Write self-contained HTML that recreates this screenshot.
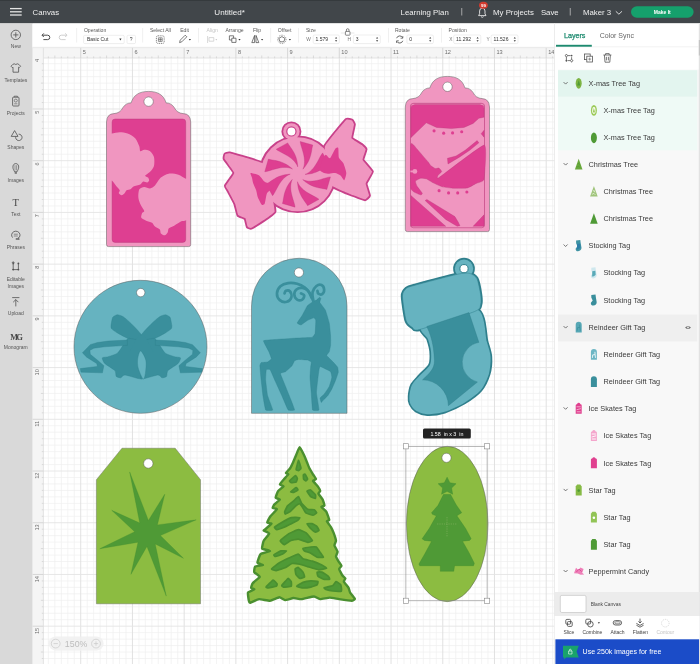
<!DOCTYPE html>
<html><head><meta charset="utf-8">
<style>
*{box-sizing:border-box;}
html,body{margin:0;padding:0;}
body{width:700px;height:664px;position:relative;overflow:hidden;background:#fff;font-family:"Liberation Sans",sans-serif;}
.a{position:absolute;will-change:transform;}

</style></head><body>
<svg class="a" style="left:0;top:0" width="700" height="664" viewBox="0 0 700 664"><line x1="48.39" y1="58" x2="48.39" y2="664" stroke="#efefef" stroke-width="0.7"/><line x1="54.86" y1="58" x2="54.86" y2="664" stroke="#efefef" stroke-width="0.7"/><line x1="61.33" y1="58" x2="61.33" y2="664" stroke="#efefef" stroke-width="0.7"/><line x1="67.79" y1="58" x2="67.79" y2="664" stroke="#efefef" stroke-width="0.7"/><line x1="74.25" y1="58" x2="74.25" y2="664" stroke="#efefef" stroke-width="0.7"/><line x1="87.19" y1="58" x2="87.19" y2="664" stroke="#efefef" stroke-width="0.7"/><line x1="93.65" y1="58" x2="93.65" y2="664" stroke="#efefef" stroke-width="0.7"/><line x1="100.11" y1="58" x2="100.11" y2="664" stroke="#efefef" stroke-width="0.7"/><line x1="106.58" y1="58" x2="106.58" y2="664" stroke="#efefef" stroke-width="0.7"/><line x1="113.05" y1="58" x2="113.05" y2="664" stroke="#efefef" stroke-width="0.7"/><line x1="119.51" y1="58" x2="119.51" y2="664" stroke="#efefef" stroke-width="0.7"/><line x1="125.97" y1="58" x2="125.97" y2="664" stroke="#efefef" stroke-width="0.7"/><line x1="138.91" y1="58" x2="138.91" y2="664" stroke="#efefef" stroke-width="0.7"/><line x1="145.37" y1="58" x2="145.37" y2="664" stroke="#efefef" stroke-width="0.7"/><line x1="151.83" y1="58" x2="151.83" y2="664" stroke="#efefef" stroke-width="0.7"/><line x1="158.30" y1="58" x2="158.30" y2="664" stroke="#efefef" stroke-width="0.7"/><line x1="164.76" y1="58" x2="164.76" y2="664" stroke="#efefef" stroke-width="0.7"/><line x1="171.23" y1="58" x2="171.23" y2="664" stroke="#efefef" stroke-width="0.7"/><line x1="177.69" y1="58" x2="177.69" y2="664" stroke="#efefef" stroke-width="0.7"/><line x1="190.62" y1="58" x2="190.62" y2="664" stroke="#efefef" stroke-width="0.7"/><line x1="197.09" y1="58" x2="197.09" y2="664" stroke="#efefef" stroke-width="0.7"/><line x1="203.56" y1="58" x2="203.56" y2="664" stroke="#efefef" stroke-width="0.7"/><line x1="210.02" y1="58" x2="210.02" y2="664" stroke="#efefef" stroke-width="0.7"/><line x1="216.48" y1="58" x2="216.48" y2="664" stroke="#efefef" stroke-width="0.7"/><line x1="222.95" y1="58" x2="222.95" y2="664" stroke="#efefef" stroke-width="0.7"/><line x1="229.41" y1="58" x2="229.41" y2="664" stroke="#efefef" stroke-width="0.7"/><line x1="242.34" y1="58" x2="242.34" y2="664" stroke="#efefef" stroke-width="0.7"/><line x1="248.81" y1="58" x2="248.81" y2="664" stroke="#efefef" stroke-width="0.7"/><line x1="255.28" y1="58" x2="255.28" y2="664" stroke="#efefef" stroke-width="0.7"/><line x1="261.74" y1="58" x2="261.74" y2="664" stroke="#efefef" stroke-width="0.7"/><line x1="268.20" y1="58" x2="268.20" y2="664" stroke="#efefef" stroke-width="0.7"/><line x1="274.67" y1="58" x2="274.67" y2="664" stroke="#efefef" stroke-width="0.7"/><line x1="281.13" y1="58" x2="281.13" y2="664" stroke="#efefef" stroke-width="0.7"/><line x1="294.06" y1="58" x2="294.06" y2="664" stroke="#efefef" stroke-width="0.7"/><line x1="300.53" y1="58" x2="300.53" y2="664" stroke="#efefef" stroke-width="0.7"/><line x1="307.00" y1="58" x2="307.00" y2="664" stroke="#efefef" stroke-width="0.7"/><line x1="313.46" y1="58" x2="313.46" y2="664" stroke="#efefef" stroke-width="0.7"/><line x1="319.92" y1="58" x2="319.92" y2="664" stroke="#efefef" stroke-width="0.7"/><line x1="326.39" y1="58" x2="326.39" y2="664" stroke="#efefef" stroke-width="0.7"/><line x1="332.86" y1="58" x2="332.86" y2="664" stroke="#efefef" stroke-width="0.7"/><line x1="345.78" y1="58" x2="345.78" y2="664" stroke="#efefef" stroke-width="0.7"/><line x1="352.25" y1="58" x2="352.25" y2="664" stroke="#efefef" stroke-width="0.7"/><line x1="358.72" y1="58" x2="358.72" y2="664" stroke="#efefef" stroke-width="0.7"/><line x1="365.18" y1="58" x2="365.18" y2="664" stroke="#efefef" stroke-width="0.7"/><line x1="371.64" y1="58" x2="371.64" y2="664" stroke="#efefef" stroke-width="0.7"/><line x1="378.11" y1="58" x2="378.11" y2="664" stroke="#efefef" stroke-width="0.7"/><line x1="384.58" y1="58" x2="384.58" y2="664" stroke="#efefef" stroke-width="0.7"/><line x1="397.50" y1="58" x2="397.50" y2="664" stroke="#efefef" stroke-width="0.7"/><line x1="403.97" y1="58" x2="403.97" y2="664" stroke="#efefef" stroke-width="0.7"/><line x1="410.43" y1="58" x2="410.43" y2="664" stroke="#efefef" stroke-width="0.7"/><line x1="416.90" y1="58" x2="416.90" y2="664" stroke="#efefef" stroke-width="0.7"/><line x1="423.37" y1="58" x2="423.37" y2="664" stroke="#efefef" stroke-width="0.7"/><line x1="429.83" y1="58" x2="429.83" y2="664" stroke="#efefef" stroke-width="0.7"/><line x1="436.29" y1="58" x2="436.29" y2="664" stroke="#efefef" stroke-width="0.7"/><line x1="449.23" y1="58" x2="449.23" y2="664" stroke="#efefef" stroke-width="0.7"/><line x1="455.69" y1="58" x2="455.69" y2="664" stroke="#efefef" stroke-width="0.7"/><line x1="462.15" y1="58" x2="462.15" y2="664" stroke="#efefef" stroke-width="0.7"/><line x1="468.62" y1="58" x2="468.62" y2="664" stroke="#efefef" stroke-width="0.7"/><line x1="475.09" y1="58" x2="475.09" y2="664" stroke="#efefef" stroke-width="0.7"/><line x1="481.55" y1="58" x2="481.55" y2="664" stroke="#efefef" stroke-width="0.7"/><line x1="488.01" y1="58" x2="488.01" y2="664" stroke="#efefef" stroke-width="0.7"/><line x1="500.94" y1="58" x2="500.94" y2="664" stroke="#efefef" stroke-width="0.7"/><line x1="507.41" y1="58" x2="507.41" y2="664" stroke="#efefef" stroke-width="0.7"/><line x1="513.88" y1="58" x2="513.88" y2="664" stroke="#efefef" stroke-width="0.7"/><line x1="520.34" y1="58" x2="520.34" y2="664" stroke="#efefef" stroke-width="0.7"/><line x1="526.80" y1="58" x2="526.80" y2="664" stroke="#efefef" stroke-width="0.7"/><line x1="533.27" y1="58" x2="533.27" y2="664" stroke="#efefef" stroke-width="0.7"/><line x1="539.74" y1="58" x2="539.74" y2="664" stroke="#efefef" stroke-width="0.7"/><line x1="552.66" y1="58" x2="552.66" y2="664" stroke="#efefef" stroke-width="0.7"/><line x1="43.5" y1="63.73" x2="556" y2="63.73" stroke="#efefef" stroke-width="0.7"/><line x1="43.5" y1="70.19" x2="556" y2="70.19" stroke="#efefef" stroke-width="0.7"/><line x1="43.5" y1="76.66" x2="556" y2="76.66" stroke="#efefef" stroke-width="0.7"/><line x1="43.5" y1="83.12" x2="556" y2="83.12" stroke="#efefef" stroke-width="0.7"/><line x1="43.5" y1="89.59" x2="556" y2="89.59" stroke="#efefef" stroke-width="0.7"/><line x1="43.5" y1="96.05" x2="556" y2="96.05" stroke="#efefef" stroke-width="0.7"/><line x1="43.5" y1="102.52" x2="556" y2="102.52" stroke="#efefef" stroke-width="0.7"/><line x1="43.5" y1="115.45" x2="556" y2="115.45" stroke="#efefef" stroke-width="0.7"/><line x1="43.5" y1="121.91" x2="556" y2="121.91" stroke="#efefef" stroke-width="0.7"/><line x1="43.5" y1="128.38" x2="556" y2="128.38" stroke="#efefef" stroke-width="0.7"/><line x1="43.5" y1="134.84" x2="556" y2="134.84" stroke="#efefef" stroke-width="0.7"/><line x1="43.5" y1="141.31" x2="556" y2="141.31" stroke="#efefef" stroke-width="0.7"/><line x1="43.5" y1="147.77" x2="556" y2="147.77" stroke="#efefef" stroke-width="0.7"/><line x1="43.5" y1="154.24" x2="556" y2="154.24" stroke="#efefef" stroke-width="0.7"/><line x1="43.5" y1="167.17" x2="556" y2="167.17" stroke="#efefef" stroke-width="0.7"/><line x1="43.5" y1="173.63" x2="556" y2="173.63" stroke="#efefef" stroke-width="0.7"/><line x1="43.5" y1="180.10" x2="556" y2="180.10" stroke="#efefef" stroke-width="0.7"/><line x1="43.5" y1="186.56" x2="556" y2="186.56" stroke="#efefef" stroke-width="0.7"/><line x1="43.5" y1="193.03" x2="556" y2="193.03" stroke="#efefef" stroke-width="0.7"/><line x1="43.5" y1="199.49" x2="556" y2="199.49" stroke="#efefef" stroke-width="0.7"/><line x1="43.5" y1="205.96" x2="556" y2="205.96" stroke="#efefef" stroke-width="0.7"/><line x1="43.5" y1="218.89" x2="556" y2="218.89" stroke="#efefef" stroke-width="0.7"/><line x1="43.5" y1="225.35" x2="556" y2="225.35" stroke="#efefef" stroke-width="0.7"/><line x1="43.5" y1="231.82" x2="556" y2="231.82" stroke="#efefef" stroke-width="0.7"/><line x1="43.5" y1="238.28" x2="556" y2="238.28" stroke="#efefef" stroke-width="0.7"/><line x1="43.5" y1="244.75" x2="556" y2="244.75" stroke="#efefef" stroke-width="0.7"/><line x1="43.5" y1="251.21" x2="556" y2="251.21" stroke="#efefef" stroke-width="0.7"/><line x1="43.5" y1="257.68" x2="556" y2="257.68" stroke="#efefef" stroke-width="0.7"/><line x1="43.5" y1="270.61" x2="556" y2="270.61" stroke="#efefef" stroke-width="0.7"/><line x1="43.5" y1="277.07" x2="556" y2="277.07" stroke="#efefef" stroke-width="0.7"/><line x1="43.5" y1="283.54" x2="556" y2="283.54" stroke="#efefef" stroke-width="0.7"/><line x1="43.5" y1="290.00" x2="556" y2="290.00" stroke="#efefef" stroke-width="0.7"/><line x1="43.5" y1="296.47" x2="556" y2="296.47" stroke="#efefef" stroke-width="0.7"/><line x1="43.5" y1="302.93" x2="556" y2="302.93" stroke="#efefef" stroke-width="0.7"/><line x1="43.5" y1="309.40" x2="556" y2="309.40" stroke="#efefef" stroke-width="0.7"/><line x1="43.5" y1="322.33" x2="556" y2="322.33" stroke="#efefef" stroke-width="0.7"/><line x1="43.5" y1="328.79" x2="556" y2="328.79" stroke="#efefef" stroke-width="0.7"/><line x1="43.5" y1="335.26" x2="556" y2="335.26" stroke="#efefef" stroke-width="0.7"/><line x1="43.5" y1="341.72" x2="556" y2="341.72" stroke="#efefef" stroke-width="0.7"/><line x1="43.5" y1="348.19" x2="556" y2="348.19" stroke="#efefef" stroke-width="0.7"/><line x1="43.5" y1="354.65" x2="556" y2="354.65" stroke="#efefef" stroke-width="0.7"/><line x1="43.5" y1="361.12" x2="556" y2="361.12" stroke="#efefef" stroke-width="0.7"/><line x1="43.5" y1="374.05" x2="556" y2="374.05" stroke="#efefef" stroke-width="0.7"/><line x1="43.5" y1="380.51" x2="556" y2="380.51" stroke="#efefef" stroke-width="0.7"/><line x1="43.5" y1="386.98" x2="556" y2="386.98" stroke="#efefef" stroke-width="0.7"/><line x1="43.5" y1="393.44" x2="556" y2="393.44" stroke="#efefef" stroke-width="0.7"/><line x1="43.5" y1="399.91" x2="556" y2="399.91" stroke="#efefef" stroke-width="0.7"/><line x1="43.5" y1="406.37" x2="556" y2="406.37" stroke="#efefef" stroke-width="0.7"/><line x1="43.5" y1="412.84" x2="556" y2="412.84" stroke="#efefef" stroke-width="0.7"/><line x1="43.5" y1="425.77" x2="556" y2="425.77" stroke="#efefef" stroke-width="0.7"/><line x1="43.5" y1="432.23" x2="556" y2="432.23" stroke="#efefef" stroke-width="0.7"/><line x1="43.5" y1="438.70" x2="556" y2="438.70" stroke="#efefef" stroke-width="0.7"/><line x1="43.5" y1="445.16" x2="556" y2="445.16" stroke="#efefef" stroke-width="0.7"/><line x1="43.5" y1="451.63" x2="556" y2="451.63" stroke="#efefef" stroke-width="0.7"/><line x1="43.5" y1="458.09" x2="556" y2="458.09" stroke="#efefef" stroke-width="0.7"/><line x1="43.5" y1="464.56" x2="556" y2="464.56" stroke="#efefef" stroke-width="0.7"/><line x1="43.5" y1="477.49" x2="556" y2="477.49" stroke="#efefef" stroke-width="0.7"/><line x1="43.5" y1="483.95" x2="556" y2="483.95" stroke="#efefef" stroke-width="0.7"/><line x1="43.5" y1="490.42" x2="556" y2="490.42" stroke="#efefef" stroke-width="0.7"/><line x1="43.5" y1="496.88" x2="556" y2="496.88" stroke="#efefef" stroke-width="0.7"/><line x1="43.5" y1="503.35" x2="556" y2="503.35" stroke="#efefef" stroke-width="0.7"/><line x1="43.5" y1="509.81" x2="556" y2="509.81" stroke="#efefef" stroke-width="0.7"/><line x1="43.5" y1="516.28" x2="556" y2="516.28" stroke="#efefef" stroke-width="0.7"/><line x1="43.5" y1="529.21" x2="556" y2="529.21" stroke="#efefef" stroke-width="0.7"/><line x1="43.5" y1="535.67" x2="556" y2="535.67" stroke="#efefef" stroke-width="0.7"/><line x1="43.5" y1="542.13" x2="556" y2="542.13" stroke="#efefef" stroke-width="0.7"/><line x1="43.5" y1="548.60" x2="556" y2="548.60" stroke="#efefef" stroke-width="0.7"/><line x1="43.5" y1="555.07" x2="556" y2="555.07" stroke="#efefef" stroke-width="0.7"/><line x1="43.5" y1="561.53" x2="556" y2="561.53" stroke="#efefef" stroke-width="0.7"/><line x1="43.5" y1="568.00" x2="556" y2="568.00" stroke="#efefef" stroke-width="0.7"/><line x1="43.5" y1="580.92" x2="556" y2="580.92" stroke="#efefef" stroke-width="0.7"/><line x1="43.5" y1="587.39" x2="556" y2="587.39" stroke="#efefef" stroke-width="0.7"/><line x1="43.5" y1="593.86" x2="556" y2="593.86" stroke="#efefef" stroke-width="0.7"/><line x1="43.5" y1="600.32" x2="556" y2="600.32" stroke="#efefef" stroke-width="0.7"/><line x1="43.5" y1="606.79" x2="556" y2="606.79" stroke="#efefef" stroke-width="0.7"/><line x1="43.5" y1="613.25" x2="556" y2="613.25" stroke="#efefef" stroke-width="0.7"/><line x1="43.5" y1="619.72" x2="556" y2="619.72" stroke="#efefef" stroke-width="0.7"/><line x1="43.5" y1="632.64" x2="556" y2="632.64" stroke="#efefef" stroke-width="0.7"/><line x1="43.5" y1="639.11" x2="556" y2="639.11" stroke="#efefef" stroke-width="0.7"/><line x1="43.5" y1="645.58" x2="556" y2="645.58" stroke="#efefef" stroke-width="0.7"/><line x1="43.5" y1="652.04" x2="556" y2="652.04" stroke="#efefef" stroke-width="0.7"/><line x1="43.5" y1="658.51" x2="556" y2="658.51" stroke="#efefef" stroke-width="0.7"/><line x1="80.72" y1="58" x2="80.72" y2="664" stroke="#dedede" stroke-width="0.9"/><line x1="132.44" y1="58" x2="132.44" y2="664" stroke="#dedede" stroke-width="0.9"/><line x1="184.16" y1="58" x2="184.16" y2="664" stroke="#dedede" stroke-width="0.9"/><line x1="235.88" y1="58" x2="235.88" y2="664" stroke="#dedede" stroke-width="0.9"/><line x1="287.60" y1="58" x2="287.60" y2="664" stroke="#dedede" stroke-width="0.9"/><line x1="339.32" y1="58" x2="339.32" y2="664" stroke="#dedede" stroke-width="0.9"/><line x1="391.04" y1="58" x2="391.04" y2="664" stroke="#dedede" stroke-width="0.9"/><line x1="442.76" y1="58" x2="442.76" y2="664" stroke="#dedede" stroke-width="0.9"/><line x1="494.48" y1="58" x2="494.48" y2="664" stroke="#dedede" stroke-width="0.9"/><line x1="546.20" y1="58" x2="546.20" y2="664" stroke="#dedede" stroke-width="0.9"/><line x1="43.5" y1="57.26" x2="556" y2="57.26" stroke="#e4e4e4" stroke-width="0.9"/><line x1="43.5" y1="108.98" x2="556" y2="108.98" stroke="#e4e4e4" stroke-width="0.9"/><line x1="43.5" y1="160.70" x2="556" y2="160.70" stroke="#e4e4e4" stroke-width="0.9"/><line x1="43.5" y1="212.42" x2="556" y2="212.42" stroke="#e4e4e4" stroke-width="0.9"/><line x1="43.5" y1="264.14" x2="556" y2="264.14" stroke="#e4e4e4" stroke-width="0.9"/><line x1="43.5" y1="315.86" x2="556" y2="315.86" stroke="#e4e4e4" stroke-width="0.9"/><line x1="43.5" y1="367.58" x2="556" y2="367.58" stroke="#e4e4e4" stroke-width="0.9"/><line x1="43.5" y1="419.30" x2="556" y2="419.30" stroke="#e4e4e4" stroke-width="0.9"/><line x1="43.5" y1="471.02" x2="556" y2="471.02" stroke="#e4e4e4" stroke-width="0.9"/><line x1="43.5" y1="522.74" x2="556" y2="522.74" stroke="#e4e4e4" stroke-width="0.9"/><line x1="43.5" y1="574.46" x2="556" y2="574.46" stroke="#e4e4e4" stroke-width="0.9"/><line x1="43.5" y1="626.18" x2="556" y2="626.18" stroke="#e4e4e4" stroke-width="0.9"/><path d="M106.5,244.4 L106.5,122.0 Q106.8,113.80000000000001 114.0,113.60000000000001 Q120.5,113.0 123.0,107.4 Q126.0,103.0 131.1,102.9 C133.5,94.9 139.5,91.4 148.6,91.4 C157.7,91.4 163.7,94.9 166.1,102.9 Q171.2,103.0 174.2,107.4 Q176.7,113.0 183.2,113.60000000000001 Q190.4,113.80000000000001 190.7,122.0 L190.7,244.4 Q190.7,246.6 188.7,246.6 L108.5,246.6 Q106.5,246.6 106.5,244.4 Z" fill="#f096c0" stroke="#5a5a5a" stroke-width="0.5"/><rect x="112.1" y="119.0" width="73.6" height="123.4" rx="3" fill="#de3f91" stroke="#b23573" stroke-width="0.4"/><path d="M108.0,136.53 C108.52,130.40 110.34,134.16 111.91,133.59 C113.48,133.02 117.65,132.22 119.74,132.22 C121.83,132.22 125.48,132.76 127.57,133.59 C129.66,134.42 133.83,136.78 135.4,138.48 C136.97,140.18 138.66,144.61 139.31,146.31 C139.96,148.01 139.64,150.73 140.29,151.2 C140.94,151.67 142.90,149.83 144.2,149.83 C145.50,149.83 148.76,150.23 150.07,151.2 C151.38,152.17 153.47,155.11 153.99,157.07 C154.51,159.03 154.51,163.92 153.99,165.88 C153.47,167.84 151.24,170.44 150.07,171.75 C148.90,173.06 145.44,174.89 145.18,175.67 C144.92,176.45 147.60,176.97 148.12,177.62 C148.64,178.27 149.23,179.91 149.1,180.56 C148.97,181.21 147.92,182.38 147.14,182.51 C146.36,182.64 144.14,181.28 143.23,181.54 C142.32,181.80 141.60,183.82 140.29,184.47 C138.98,185.12 134.75,185.78 133.44,186.43 C132.13,187.08 131.41,188.84 130.5,189.36 C129.59,189.88 127.37,189.82 126.59,190.34 C125.81,190.86 125.28,192.63 124.63,193.28 C123.98,193.93 122.48,195.23 121.7,195.23 C120.92,195.23 119.02,193.93 118.76,193.28 C118.50,192.63 120.13,191.38 119.74,190.34 C119.35,189.30 116.87,186.75 115.83,185.45 C114.79,184.15 112.95,181.34 111.91,180.56 C110.87,179.78 108.52,185.45 108.0,179.58 C107.48,173.71 107.48,142.66 108.0,136.53 Z" fill="#f096c0"/><path d="M139.31,189.36 C140.09,188.00 142.77,187.15 144.2,187.02 C145.63,186.89 148.63,188.60 150.07,188.39 C151.51,188.18 153.53,186.89 154.97,185.45 C156.41,184.01 159.01,179.19 160.84,177.62 C162.67,176.05 166.32,174.10 168.67,173.71 C171.02,173.32 176.23,174.04 178.45,174.69 C180.67,175.34 183.94,177.82 185.3,178.6 C186.66,179.38 188.19,175.47 188.63,180.56 C189.07,185.65 189.73,211.28 188.63,216.76 C187.53,222.24 182.55,220.34 180.41,221.65 C178.27,222.96 174.15,225.64 172.58,226.55 C171.01,227.46 169.32,227.72 168.67,228.5 C168.02,229.28 168.21,231.51 167.69,232.42 C167.17,233.33 165.66,235.22 164.75,235.35 C163.84,235.48 161.49,234.18 160.84,233.4 C160.19,232.62 160.64,230.39 159.86,229.48 C159.08,228.57 156.01,227.46 154.97,226.55 C153.93,225.64 153.20,223.41 152.03,222.63 C150.86,221.85 147.59,221.33 146.16,220.68 C144.73,220.03 141.79,218.78 141.27,217.74 C140.75,216.70 141.86,213.76 142.25,212.85 C142.64,211.94 144.46,212.06 144.2,210.89 C143.94,209.72 141.07,205.87 140.29,204.04 C139.51,202.21 138.46,199.15 138.33,197.19 C138.20,195.23 138.53,190.72 139.31,189.36 Z" fill="#f096c0"/><circle cx="148.6" cy="101.6" r="4.7" fill="#fff" stroke="#5a5a5a" stroke-width="0.5"/><path d="M405.3,229.4 L405.3,107.0 Q405.6,98.80000000000001 412.8,98.60000000000001 Q419.3,98.0 421.8,92.4 Q424.8,88.0 429.90000000000003,87.9 C432.3,79.9 438.3,76.4 447.40000000000003,76.4 C456.5,76.4 462.5,79.9 464.90000000000003,87.9 Q470.0,88.0 473.0,92.4 Q475.5,98.0 482.0,98.60000000000001 Q489.20000000000005,98.80000000000001 489.5,107.0 L489.5,229.4 Q489.5,231.6 487.5,231.6 L407.3,231.6 Q405.3,231.6 405.3,229.4 Z" fill="#f096c0" stroke="#5a5a5a" stroke-width="0.5"/><rect x="410.5" y="103.4" width="74" height="124" rx="3" fill="#de3f91" stroke="#b23573" stroke-width="0.4"/><circle cx="447.5" cy="86.8" r="4.7" fill="#fff" stroke="#5a5a5a" stroke-width="0.5"/><circle cx="140.5" cy="346.8" r="66.5" fill="#66b3c0" stroke="#5a5a5a" stroke-width="0.5"/><circle cx="140.7" cy="292.6" r="4.2" fill="#fff" stroke="#5a5a5a" stroke-width="0.5"/><path d="M251.5,413.3 L251.5,306 A47.75,47.75 0 0 1 347,306 L347,413.3 Z" fill="#66b3c0" stroke="#5a5a5a" stroke-width="0.5"/><circle cx="298.9" cy="272.5" r="4.6" fill="#fff" stroke="#5a5a5a" stroke-width="0.5"/><!--stocking--><path d="M122,448.2 L175.2,448.2 L200.5,479.7 L200.5,603.8 L96.4,603.8 L96.4,479.7 Z" fill="#8cbc41" stroke="#5a5a5a" stroke-width="0.4"/><circle cx="148.3" cy="463.5" r="4.7" fill="#fff" stroke="#5a5a5a" stroke-width="0.5"/><!--tree--><ellipse cx="447.2" cy="524" rx="40.8" ry="77.7" fill="#8cbc41" stroke="#5a5a5a" stroke-width="0.5"/><circle cx="446.5" cy="457.8" r="4.6" fill="#fff" stroke="#5a5a5a" stroke-width="0.5"/><path d="M225.21,154.37 C225.42,154.15 228.07,152.93 229.67,153.34 C231.27,153.75 263.38,162.33 265.18,164.66 C266.98,166.99 275.16,208.97 274.61,211.5 C274.06,214.03 252.53,227.20 251.45,227.8 C250.37,228.40 247.75,226.80 247.51,226.42 C247.27,226.04 245.82,218.81 245.45,218.36 C245.08,217.91 238.65,215.68 238.24,215.1 C237.83,214.52 235.57,204.78 235.16,203.78 C234.75,202.78 228.33,190.77 227.95,190.05 C227.57,189.33 225.47,186.45 225.72,185.76 C225.97,185.07 234.35,173.98 234.3,172.9 C234.25,171.82 224.88,159.57 224.52,158.83 C224.16,158.09 225.00,154.59 225.21,154.37 Z" fill="#c8418a" stroke="#c8418a" stroke-width="3.6" stroke-linejoin="round"/><path d="M324.86,146.72 C325.44,144.10 345.21,120.85 346.29,119.8 C347.37,118.75 351.64,120.30 351.95,120.49 C352.26,120.68 354.03,123.72 354.01,124.43 C353.99,125.14 351.12,137.32 351.43,138.14 C351.74,138.96 361.15,144.55 361.72,145.0 C362.29,145.45 365.63,148.69 365.66,149.29 C365.69,149.89 362.33,159.03 362.58,159.92 C362.83,160.81 371.89,170.62 372.01,171.57 C372.13,172.52 365.78,182.62 365.66,183.58 C365.54,184.54 369.11,194.95 369.09,195.58 C369.07,196.21 365.89,199.41 365.15,199.35 C364.41,199.29 351.92,194.76 350.58,194.2 C349.24,193.64 332.75,187.19 331.72,185.29 C330.69,183.39 324.28,149.34 324.86,146.72 Z" fill="#c8418a" stroke="#c8418a" stroke-width="3.6" stroke-linejoin="round"/><circle cx="297.6" cy="174.3" r="37.0" fill="#c8418a" stroke="#c8418a" stroke-width="3.6" stroke-linejoin="round"/><circle cx="291.4" cy="131.4" r="8.2" fill="#c8418a" stroke="#c8418a" stroke-width="3.6" stroke-linejoin="round"/><path d="M225.21,154.37 C225.42,154.15 228.07,152.93 229.67,153.34 C231.27,153.75 263.38,162.33 265.18,164.66 C266.98,166.99 275.16,208.97 274.61,211.5 C274.06,214.03 252.53,227.20 251.45,227.8 C250.37,228.40 247.75,226.80 247.51,226.42 C247.27,226.04 245.82,218.81 245.45,218.36 C245.08,217.91 238.65,215.68 238.24,215.1 C237.83,214.52 235.57,204.78 235.16,203.78 C234.75,202.78 228.33,190.77 227.95,190.05 C227.57,189.33 225.47,186.45 225.72,185.76 C225.97,185.07 234.35,173.98 234.3,172.9 C234.25,171.82 224.88,159.57 224.52,158.83 C224.16,158.09 225.00,154.59 225.21,154.37 Z" fill="#f096c0" /><path d="M324.86,146.72 C325.44,144.10 345.21,120.85 346.29,119.8 C347.37,118.75 351.64,120.30 351.95,120.49 C352.26,120.68 354.03,123.72 354.01,124.43 C353.99,125.14 351.12,137.32 351.43,138.14 C351.74,138.96 361.15,144.55 361.72,145.0 C362.29,145.45 365.63,148.69 365.66,149.29 C365.69,149.89 362.33,159.03 362.58,159.92 C362.83,160.81 371.89,170.62 372.01,171.57 C372.13,172.52 365.78,182.62 365.66,183.58 C365.54,184.54 369.11,194.95 369.09,195.58 C369.07,196.21 365.89,199.41 365.15,199.35 C364.41,199.29 351.92,194.76 350.58,194.2 C349.24,193.64 332.75,187.19 331.72,185.29 C330.69,183.39 324.28,149.34 324.86,146.72 Z" fill="#f096c0" /><circle cx="297.6" cy="174.3" r="37.0" fill="#f096c0" /><circle cx="291.4" cy="131.4" r="8.2" fill="#f096c0" /><circle cx="291.4" cy="131.4" r="4.6" fill="#fff" stroke="#c8418a" stroke-width="1.2"/><path d="M276.21,149.26 L277.71,150.38 L279.39,151.37 L281.14,152.32 L282.95,153.27 L284.77,154.24 L286.58,155.27 L288.37,156.37 L290.11,157.56 L291.76,158.85 L293.31,160.25 L294.71,161.76 L295.94,163.38 L296.96,165.10 L297.73,166.90 L297.73,166.90 L297.61,165.08 L297.40,163.25 L297.10,161.44 L296.69,159.63 L296.16,157.84 L295.53,156.08 L294.78,154.33 L293.93,152.62 L292.98,150.94 L291.94,149.30 L290.85,147.68 L289.72,146.10 L288.63,144.52 L287.70,142.89 Z" fill="#de3f91" stroke="#b9347a" stroke-width="0.3"/><path d="M300.18,141.47 L300.45,143.32 L300.94,145.21 L301.51,147.12 L302.11,149.06 L302.71,151.04 L303.27,153.05 L303.75,155.10 L304.14,157.16 L304.40,159.25 L304.50,161.33 L304.43,163.39 L304.15,165.41 L303.65,167.34 L302.92,169.16 L302.92,169.16 L304.13,167.78 L305.27,166.35 L306.34,164.85 L307.32,163.28 L308.22,161.65 L309.02,159.95 L309.73,158.19 L310.33,156.37 L310.85,154.51 L311.28,152.62 L311.64,150.70 L311.97,148.79 L312.32,146.89 L312.81,145.09 Z" fill="#de3f91" stroke="#b9347a" stroke-width="0.3"/><path d="M322.64,152.91 L321.52,154.41 L320.53,156.09 L319.58,157.84 L318.63,159.65 L317.66,161.47 L316.63,163.28 L315.53,165.07 L314.34,166.81 L313.05,168.46 L311.65,170.01 L310.14,171.41 L308.52,172.64 L306.80,173.66 L305.00,174.43 L305.00,174.43 L306.82,174.31 L308.65,174.10 L310.46,173.80 L312.27,173.39 L314.06,172.86 L315.82,172.23 L317.57,171.48 L319.28,170.63 L320.96,169.68 L322.60,168.64 L324.22,167.55 L325.80,166.42 L327.38,165.33 L329.01,164.40 Z" fill="#de3f91" stroke="#b9347a" stroke-width="0.3"/><path d="M330.43,176.88 L328.58,177.15 L326.69,177.64 L324.78,178.21 L322.84,178.81 L320.86,179.41 L318.85,179.97 L316.80,180.45 L314.74,180.84 L312.65,181.10 L310.57,181.20 L308.51,181.13 L306.49,180.85 L304.56,180.35 L302.74,179.62 L302.74,179.62 L304.12,180.83 L305.55,181.97 L307.05,183.04 L308.62,184.02 L310.25,184.92 L311.95,185.72 L313.71,186.43 L315.53,187.03 L317.39,187.55 L319.28,187.98 L321.20,188.34 L323.11,188.67 L325.01,189.02 L326.81,189.51 Z" fill="#de3f91" stroke="#b9347a" stroke-width="0.3"/><path d="M318.99,199.34 L317.49,198.22 L315.81,197.23 L314.06,196.28 L312.25,195.33 L310.43,194.36 L308.62,193.33 L306.83,192.23 L305.09,191.04 L303.44,189.75 L301.89,188.35 L300.49,186.84 L299.26,185.22 L298.24,183.50 L297.47,181.70 L297.47,181.70 L297.59,183.52 L297.80,185.35 L298.10,187.16 L298.51,188.97 L299.04,190.76 L299.67,192.52 L300.42,194.27 L301.27,195.98 L302.22,197.66 L303.26,199.30 L304.35,200.92 L305.48,202.50 L306.57,204.08 L307.50,205.71 Z" fill="#de3f91" stroke="#b9347a" stroke-width="0.3"/><path d="M295.02,207.13 L294.75,205.28 L294.26,203.39 L293.69,201.48 L293.09,199.54 L292.49,197.56 L291.93,195.55 L291.45,193.50 L291.06,191.44 L290.80,189.35 L290.70,187.27 L290.77,185.21 L291.05,183.19 L291.55,181.26 L292.28,179.44 L292.28,179.44 L291.07,180.82 L289.93,182.25 L288.86,183.75 L287.88,185.32 L286.98,186.95 L286.18,188.65 L285.47,190.41 L284.87,192.23 L284.35,194.09 L283.92,195.98 L283.56,197.90 L283.23,199.81 L282.88,201.71 L282.39,203.51 Z" fill="#de3f91" stroke="#b9347a" stroke-width="0.3"/><path d="M272.56,195.69 L273.68,194.19 L274.67,192.51 L275.62,190.76 L276.57,188.95 L277.54,187.13 L278.57,185.32 L279.67,183.53 L280.86,181.79 L282.15,180.14 L283.55,178.59 L285.06,177.19 L286.68,175.96 L288.40,174.94 L290.20,174.17 L290.20,174.17 L288.38,174.29 L286.55,174.50 L284.74,174.80 L282.93,175.21 L281.14,175.74 L279.38,176.37 L277.63,177.12 L275.92,177.97 L274.24,178.92 L272.60,179.96 L270.98,181.05 L269.40,182.18 L267.82,183.27 L266.19,184.20 Z" fill="#de3f91" stroke="#b9347a" stroke-width="0.3"/><path d="M264.77,171.72 L266.62,171.45 L268.51,170.96 L270.42,170.39 L272.36,169.79 L274.34,169.19 L276.35,168.63 L278.40,168.15 L280.46,167.76 L282.55,167.50 L284.63,167.40 L286.69,167.47 L288.71,167.75 L290.64,168.25 L292.46,168.98 L292.46,168.98 L291.08,167.77 L289.65,166.63 L288.15,165.56 L286.58,164.58 L284.95,163.68 L283.25,162.88 L281.49,162.17 L279.67,161.57 L277.81,161.05 L275.92,160.62 L274.00,160.26 L272.09,159.93 L270.19,159.58 L268.39,159.09 Z" fill="#de3f91" stroke="#b9347a" stroke-width="0.3"/><path d="M250.6,172.9 C251.32,172.68 257.83,174.65 259.17,175.47 C260.51,176.29 263.04,180.39 263.98,181.13 C264.92,181.87 267.38,183.16 268.61,182.85 C269.85,182.54 275.18,178.61 276.33,178.04 C277.48,177.47 279.76,176.81 280.1,177.19 C280.44,177.57 280.22,180.96 279.76,181.82 C279.30,182.68 276.33,185.02 275.47,185.76 C274.61,186.50 272.04,188.43 271.18,189.2 C270.32,189.97 267.54,192.02 266.89,193.48 C266.24,194.94 265.17,202.66 264.66,203.78 C264.15,204.90 262.44,205.29 261.75,204.64 C261.06,203.99 258.37,198.72 257.8,197.26 C257.23,195.80 256.55,191.46 256.09,190.05 C255.63,188.64 253.58,184.43 253.17,183.19 C252.76,181.95 252.23,178.73 251.97,177.7 C251.71,176.67 249.88,173.12 250.6,172.9 Z" fill="#de3f91"/><path d="M322.29,159.92 C322.89,158.41 324.95,154.94 325.72,154.77 C326.49,154.60 329.06,158.78 330.0,158.2 C330.94,157.62 334.33,149.97 335.15,148.94 C335.97,147.91 337.85,147.03 338.23,147.92 C338.61,148.81 338.41,156.32 338.92,157.86 C339.44,159.40 342.64,161.84 343.38,163.35 C344.12,164.86 346.21,171.27 346.29,172.95 C346.38,174.63 344.83,179.91 344.23,180.15 C343.63,180.39 341.20,176.07 340.29,175.35 C339.38,174.63 336.26,173.12 335.15,172.95 C334.04,172.78 330.26,173.63 329.15,173.63 C328.03,173.63 324.94,173.33 324.0,172.95 C323.06,172.57 319.89,171.16 319.72,169.86 C319.55,168.56 321.69,161.43 322.29,159.92 Z" fill="#de3f91"/><rect x="410.5" y="103.4" width="74" height="124.4" rx="3" fill="#f096c0" stroke="#b23573" stroke-width="0.4"/><path d="M410.86,137.71 L410.86,108.57 L411.43,105.71 L414.86,104.57 L480.0,104.57 L483.43,105.71 L484.0,108.57 L484.0,117.14 L478.86,118.29 L473.14,123.43 L464.0,127.43 L451.43,128.57 L436.57,127.43 L426.29,122.86 Z" fill="#de3f91" stroke="#b23573" stroke-width="0.3" stroke-linejoin="round"/><path d="M481.14,133.71 L484.0,130.29 L484.0,137.14 Z" fill="#de3f91" stroke="#b23573" stroke-width="0.3" stroke-linejoin="round"/><path d="M447.43,158.29 L456.0,156.0 L465.14,150.29 L477.14,140.57 L478.86,142.86 L469.71,150.29 L459.43,157.14 L448.0,164.0 Z" fill="#de3f91" stroke="#b23573" stroke-width="0.3" stroke-linejoin="round"/><path d="M425.14,200.57 L426.86,199.43 L454.86,216.57 L458.29,222.29 L460.0,225.71 L457.14,226.29 L445.71,219.43 Z" fill="#de3f91" stroke="#b23573" stroke-width="0.3" stroke-linejoin="round"/><path d="M410.86,195.43 L410.86,226.29 L445.71,226.29 Z" fill="#de3f91" stroke="#b23573" stroke-width="0.3" stroke-linejoin="round"/><path d="M473.14,226.29 L484.0,214.86 L484.0,226.29 Z" fill="#de3f91" stroke="#b23573" stroke-width="0.3" stroke-linejoin="round"/><path d="M410.86,144.0 C411.28,141.37 416.26,148.26 417.14,149.14 C418.02,150.02 423.28,156.30 424.0,157.14 C424.72,157.98 427.54,161.14 428.0,161.71 C428.46,162.28 430.36,165.25 430.86,165.71 C431.36,166.17 434.90,168.42 435.43,168.57 C435.96,168.72 438.44,167.81 438.86,168.0 C439.28,168.19 441.77,170.93 441.71,171.43 C441.65,171.93 438.11,175.14 437.94,175.54 C437.77,175.94 436.00,179.52 439.09,177.49 C442.18,175.46 481.31,144.98 484.3,145.1 C487.29,145.22 484.54,176.75 484.0,179.31 C483.46,181.87 477.33,182.85 476.23,183.43 C475.13,184.01 468.93,187.67 467.43,188.0 C465.93,188.33 455.39,188.42 453.71,188.34 C452.03,188.26 443.66,187.23 442.29,186.86 C440.92,186.49 434.21,183.39 433.14,182.86 C432.07,182.33 427.13,179.16 426.29,178.86 C425.45,178.56 421.29,178.14 420.57,178.29 C419.85,178.44 415.66,180.61 415.43,181.14 C415.20,181.67 416.68,185.49 417.14,186.29 C417.60,187.09 422.06,192.57 422.29,193.14 C422.52,193.71 421.33,195.16 420.57,194.86 C419.81,194.56 411.51,191.96 410.86,188.57 C410.21,185.18 410.44,146.63 410.86,144.0 Z" fill="#de3f91" stroke="#b23573" stroke-width="0.3"/><circle cx="414.86" cy="171.43" r="2.4" fill="#f096c0"/><rect x="410.4" y="170.53" width="4.460000000000036" height="1.8" fill="#f096c0"/><circle cx="434.06" cy="130.86" r="1.55" fill="#de3f91"/><circle cx="443.66" cy="133.14" r="1.55" fill="#de3f91"/><circle cx="452.57" cy="132.91" r="1.55" fill="#de3f91"/><circle cx="461.71" cy="131.77" r="1.55" fill="#de3f91"/><circle cx="439.09" cy="190.63" r="1.55" fill="#de3f91"/><circle cx="448.57" cy="192.91" r="1.55" fill="#de3f91"/><circle cx="457.71" cy="192.91" r="1.55" fill="#de3f91"/><circle cx="466.86" cy="192.0" r="1.55" fill="#de3f91"/><path d="M141.51,334.9 C140.49,332.99 133.13,325.47 131.3,323.65 C129.47,321.83 124.58,317.59 123.19,316.7 C121.80,315.81 118.43,314.66 117.39,314.72 C116.35,314.78 113.39,316.21 112.75,317.28 C112.11,318.35 111.13,324.23 111.01,325.39 C110.89,326.55 110.95,328.12 111.59,328.87 C112.23,329.62 115.71,331.94 117.39,332.93 C119.07,333.92 126.00,337.74 128.41,338.72 C130.82,339.71 140.20,343.16 141.51,342.78 C142.82,342.40 142.53,336.81 141.51,334.9 Z" fill="#3a8f9c" stroke="#2f7f8c" stroke-width="0.35"/><path d="M141.29,334.9 C142.31,332.99 149.67,325.47 151.5,323.65 C153.33,321.83 158.22,317.59 159.61,316.7 C161.00,315.81 164.37,314.66 165.41,314.72 C166.45,314.78 169.41,316.21 170.05,317.28 C170.69,318.35 171.67,324.23 171.79,325.39 C171.91,326.55 171.85,328.12 171.21,328.87 C170.57,329.62 167.09,331.94 165.41,332.93 C163.73,333.92 156.80,337.74 154.39,338.72 C151.98,339.71 142.60,343.16 141.29,342.78 C139.98,342.40 140.27,336.81 141.29,334.9 Z" fill="#3a8f9c" stroke="#2f7f8c" stroke-width="0.35"/><path d="M128.41,338.38 C126.58,338.73 124.29,343.62 123.19,345.1 C122.09,346.58 118.90,352.06 117.39,353.22 C115.88,354.38 109.63,356.24 108.12,356.7 C106.61,357.16 102.67,357.19 102.32,357.86 C101.97,358.53 103.39,362.15 104.64,363.42 C105.89,364.69 113.68,369.31 114.84,370.61 C116.00,371.91 115.63,375.69 116.23,376.41 C116.83,377.13 120.00,377.94 120.87,377.8 C121.74,377.66 122.84,374.89 124.93,375.01 C127.02,375.13 140.18,379.63 141.74,378.96 C143.31,378.29 140.70,370.40 140.58,368.29 C140.46,366.18 140.49,359.60 140.58,357.86 C140.67,356.12 141.42,352.52 141.51,350.9 C141.60,349.28 142.82,342.87 141.51,341.62 C140.20,340.37 130.24,338.03 128.41,338.38 Z" fill="#3a8f9c" stroke="#2f7f8c" stroke-width="0.35"/><path d="M154.39,338.38 C156.22,338.73 158.51,343.62 159.61,345.1 C160.71,346.58 163.90,352.06 165.41,353.22 C166.92,354.38 173.17,356.24 174.68,356.7 C176.19,357.16 180.13,357.19 180.48,357.86 C180.83,358.53 179.41,362.15 178.16,363.42 C176.91,364.69 169.12,369.31 167.96,370.61 C166.80,371.91 167.17,375.69 166.57,376.41 C165.97,377.13 162.80,377.94 161.93,377.8 C161.06,377.66 159.96,374.89 157.87,375.01 C155.78,375.13 142.62,379.63 141.06,378.96 C139.50,378.29 142.10,370.40 142.22,368.29 C142.34,366.18 142.31,359.60 142.22,357.86 C142.13,356.12 141.38,352.52 141.29,350.9 C141.20,349.28 139.98,342.87 141.29,341.62 C142.60,340.37 152.56,338.03 154.39,338.38 Z" fill="#3a8f9c" stroke="#2f7f8c" stroke-width="0.35"/><path d="M127.43,340.0 L108.14,341.07 L97.43,342.5 L90.29,344.64 L82.43,352.86 L86.71,357.14 L96.71,363.57 L97.43,366.43 L80.29,368.57 L81.0,372.14 L102.43,372.86 L103.86,365.71 L98.14,360.71 L90.29,354.29 L89.93,350.36 L93.86,348.21 L104.57,346.79 L127.43,345.36 Z" fill="#3a8f9c" stroke="#2f7f8c" stroke-width="0.35" stroke-linejoin="round"/><path d="M155.37,340.0 L174.66,341.07 L185.37,342.5 L192.51,344.64 L200.37,352.86 L196.09,357.14 L186.09,363.57 L185.37,366.43 L202.51,368.57 L201.8,372.14 L180.37,372.86 L178.94,365.71 L184.66,360.71 L192.51,354.29 L192.87,350.36 L188.94,348.21 L178.23,346.79 L155.37,345.36 Z" fill="#3a8f9c" stroke="#2f7f8c" stroke-width="0.35" stroke-linejoin="round"/><path d="M138.4,335.5 L144.4,335.5 L153.4,352 H129.4 Z" fill="#3a8f9c"/><path d="M140.58,350.9 C141.80,351.07 145.07,356.87 145.8,360.17 C146.53,363.47 145.85,370.11 145.45,372.93 C145.05,375.75 144.21,379.66 143.13,378.96 C142.05,378.26 139.08,371.28 138.26,368.29 C137.44,365.30 137.33,361.62 137.68,359.01 C138.03,356.40 139.36,350.73 140.58,350.9 Z" fill="#66b3c0" stroke="#2f7f8c" stroke-width="0.35"/><path d="M297.14,323.0 C297.20,322.52 301.77,316.15 302.28,315.28 C302.79,314.41 306.85,306.35 307.43,305.64 C308.01,304.93 313.41,301.42 313.86,301.14 C314.31,300.86 316.14,300.30 316.43,300.11 C316.72,299.92 319.42,297.37 319.64,297.29 C319.86,297.21 320.79,298.31 320.8,298.57 C320.81,298.83 319.67,301.85 319.9,302.43 C320.13,303.01 324.96,309.11 325.43,310.14 C325.90,311.17 329.02,321.71 329.28,323.0 C329.54,324.29 330.51,334.75 330.57,335.86 C330.63,336.97 330.63,344.50 330.57,345.29 C330.51,346.08 329.47,351.20 329.28,351.71 C329.09,352.22 326.52,355.06 326.71,355.57 C326.90,356.08 332.59,361.42 333.14,362.0 C333.69,362.58 337.38,366.63 337.64,367.14 C337.90,367.65 338.38,371.64 338.28,372.28 C338.18,372.92 336.03,379.16 335.71,380.0 C335.39,380.84 332.24,388.23 331.85,389.0 C331.46,389.77 328.45,394.85 328.0,395.43 C327.55,396.01 323.19,400.22 322.86,400.57 C322.53,400.92 321.45,402.63 321.31,402.5 C321.17,402.37 319.89,398.42 320.03,398.0 C320.17,397.58 323.68,394.72 324.14,394.14 C324.60,393.56 328.89,387.27 329.28,386.43 C329.67,385.59 331.79,378.17 331.85,377.43 C331.91,376.69 331.15,372.19 330.57,371.64 C329.99,371.09 320.86,366.60 320.28,366.5 C319.70,366.40 319.13,369.03 319.0,369.71 C318.87,370.38 317.84,378.84 317.71,380.0 C317.58,381.16 316.37,391.36 316.43,392.86 C316.49,394.36 319.19,409.10 319.0,409.96 C318.81,410.81 312.96,410.81 312.57,409.96 C312.18,409.10 311.41,394.49 311.28,392.86 C311.15,391.23 310.03,378.72 310.0,377.43 C309.97,376.14 310.58,367.91 310.64,367.14 C310.70,366.37 311.44,362.35 311.28,362.0 C311.12,361.65 308.07,360.20 307.43,360.07 C306.79,359.94 299.07,359.40 298.43,359.43 C297.79,359.46 294.89,360.39 294.57,360.71 C294.25,361.03 292.45,365.31 292.0,365.86 C291.55,366.41 286.15,371.25 285.57,371.64 C284.99,372.03 280.43,372.83 280.43,373.57 C280.43,374.31 285.06,385.14 285.57,386.43 C286.08,387.72 290.26,398.10 290.71,399.28 C291.16,400.46 294.70,409.43 294.57,409.96 C294.44,410.49 288.78,410.69 288.14,409.96 C287.50,409.23 282.35,396.86 281.71,395.43 C281.07,394.00 275.87,382.57 275.29,381.28 C274.71,379.99 270.59,370.29 270.14,369.71 C269.69,369.13 266.52,369.20 266.29,369.71 C266.06,370.22 265.58,378.71 265.64,380.0 C265.70,381.29 267.22,393.93 267.57,395.43 C267.92,396.93 272.81,409.23 272.71,409.96 C272.61,410.69 266.12,410.62 265.64,409.96 C265.16,409.30 263.30,398.21 263.07,396.71 C262.84,395.21 261.30,381.54 261.14,380.0 C260.98,378.46 259.86,366.73 259.86,365.86 C259.86,364.99 260.75,362.83 261.14,362.64 C261.53,362.45 267.06,362.19 267.57,362.0 C268.08,361.81 271.37,359.30 271.43,358.79 C271.49,358.28 269.26,352.61 268.86,351.71 C268.46,350.81 263.14,341.40 263.46,340.79 C263.78,340.18 273.73,339.63 275.29,339.5 C276.85,339.37 292.83,338.31 294.57,338.21 C296.31,338.11 309.10,337.62 310.0,337.57 C310.90,337.52 312.31,337.35 312.57,337.14 C312.83,336.93 314.98,334.12 315.14,333.28 C315.30,332.44 315.84,321.20 315.78,320.43 C315.72,319.66 314.28,317.86 313.86,317.86 C313.44,317.86 308.07,320.08 307.43,320.43 C306.79,320.78 301.51,324.80 301.0,324.93 C300.49,325.06 297.08,323.48 297.14,323.0 Z" fill="#3a8f9c" stroke="#2f7f8c" stroke-width="0.35" stroke-linejoin="round"/><path d="M313.21,300.89 C312.67,299.65 311.39,295.64 310.0,293.43 C308.61,291.22 307.00,289.25 304.86,287.64 C302.72,286.03 299.93,284.54 297.14,283.79 C294.35,283.04 290.92,282.71 288.14,283.14 C285.36,283.57 282.29,284.64 280.43,286.36 C278.57,288.08 277.07,291.14 276.96,293.43 C276.85,295.72 278.14,298.72 279.79,300.11 C281.44,301.50 284.93,302.26 286.86,301.79 C288.79,301.32 290.83,299.00 291.36,297.29 C291.89,295.58 290.99,292.57 290.07,291.5 C289.15,290.43 286.75,290.54 285.83,290.86 C284.91,291.18 284.75,293.00 284.54,293.43" fill="none" stroke="#3a8f9c" stroke-width="2.7" stroke-linecap="round"/><path d="M311.54,297.54 C310.96,296.43 309.61,292.45 308.07,290.86 C306.53,289.27 304.21,288.25 302.28,288.03 C300.35,287.81 297.83,288.46 296.5,289.57 C295.17,290.68 294.20,293.04 294.31,294.71 C294.42,296.38 295.81,298.79 297.14,299.6 C298.47,300.42 301.10,300.31 302.28,299.6 C303.46,298.89 304.42,296.39 304.21,295.36 C304.00,294.33 301.53,293.75 301.0,293.43" fill="none" stroke="#3a8f9c" stroke-width="2.7" stroke-linecap="round"/><path d="M313.21,300.11 C313.10,298.78 312.03,294.50 312.57,292.14 C313.11,289.78 314.93,287.15 316.43,285.97 C317.93,284.79 320.28,284.47 321.57,285.07 C322.86,285.67 324.03,288.07 324.14,289.57 C324.25,291.07 323.17,293.38 322.21,294.07 C321.25,294.76 319.15,294.23 318.36,293.69 C317.57,293.15 317.61,291.33 317.46,290.86" fill="none" stroke="#3a8f9c" stroke-width="2.7" stroke-linecap="round"/><circle cx="464.0" cy="268.65" r="9.2" fill="#2f7f8c" stroke="#2f7f8c" stroke-width="3.3" stroke-linejoin="round"/><path d="M422.8,325.74 C416.28,329.68 426.92,335.73 428.01,339.14 C429.10,342.55 430.72,347.89 430.99,351.3 C431.26,354.71 431.52,361.42 430.0,364.7 C428.48,367.98 421.99,373.16 419.57,375.87 C417.15,378.58 413.24,382.31 411.88,385.06 C410.52,387.81 409.60,393.96 409.4,396.47 C409.20,398.98 409.50,402.00 410.39,403.92 C411.28,405.84 413.85,409.48 416.1,410.87 C418.35,412.26 423.46,414.21 427.27,414.34 C431.08,414.47 439.68,413.41 444.64,411.86 C449.60,410.31 459.70,405.56 464.5,402.68 C469.30,399.80 477.39,394.08 480.63,390.27 C483.87,386.46 487.50,378.61 488.82,374.14 C490.14,369.67 490.83,361.06 490.56,356.76 C490.29,352.46 488.65,348.16 486.83,341.87 C485.01,335.58 485.45,311.75 476.91,309.6 C468.37,307.45 429.32,321.80 422.8,325.74 Z" fill="#2f7f8c" stroke="#2f7f8c" stroke-width="3.3" stroke-linejoin="round"/><path d="M402.45,295.95 C402.45,292.19 404.72,289.75 406.17,288.51 C407.62,287.27 408.92,286.93 414.86,285.28 C420.80,283.63 450.68,275.75 457.05,274.36 C463.42,272.97 467.14,272.88 469.46,273.37 C471.78,273.86 475.61,276.09 476.91,278.58 C478.21,281.07 480.20,291.67 480.63,294.71 C481.06,297.75 481.35,302.67 480.63,304.64 C479.91,306.61 481.51,308.69 474.42,311.59 C467.33,314.49 427.06,327.61 419.82,329.46 C412.58,331.31 413.96,328.48 412.37,327.47 C410.78,326.46 407.33,324.45 406.17,320.77 C405.01,317.09 402.45,299.71 402.45,295.95 Z" fill="#2f7f8c" stroke="#2f7f8c" stroke-width="3.3" stroke-linejoin="round"/><circle cx="464.0" cy="268.65" r="9.2" fill="#66b3c0" /><path d="M422.8,325.74 C416.28,329.68 426.92,335.73 428.01,339.14 C429.10,342.55 430.72,347.89 430.99,351.3 C431.26,354.71 431.52,361.42 430.0,364.7 C428.48,367.98 421.99,373.16 419.57,375.87 C417.15,378.58 413.24,382.31 411.88,385.06 C410.52,387.81 409.60,393.96 409.4,396.47 C409.20,398.98 409.50,402.00 410.39,403.92 C411.28,405.84 413.85,409.48 416.1,410.87 C418.35,412.26 423.46,414.21 427.27,414.34 C431.08,414.47 439.68,413.41 444.64,411.86 C449.60,410.31 459.70,405.56 464.5,402.68 C469.30,399.80 477.39,394.08 480.63,390.27 C483.87,386.46 487.50,378.61 488.82,374.14 C490.14,369.67 490.83,361.06 490.56,356.76 C490.29,352.46 488.65,348.16 486.83,341.87 C485.01,335.58 485.45,311.75 476.91,309.6 C468.37,307.45 429.32,321.80 422.8,325.74 Z" fill="#66b3c0" /><path d="M402.45,295.95 C402.45,292.19 404.72,289.75 406.17,288.51 C407.62,287.27 408.92,286.93 414.86,285.28 C420.80,283.63 450.68,275.75 457.05,274.36 C463.42,272.97 467.14,272.88 469.46,273.37 C471.78,273.86 475.61,276.09 476.91,278.58 C478.21,281.07 480.20,291.67 480.63,294.71 C481.06,297.75 481.35,302.67 480.63,304.64 C479.91,306.61 481.51,308.69 474.42,311.59 C467.33,314.49 427.06,327.61 419.82,329.46 C412.58,331.31 413.96,328.48 412.37,327.47 C410.78,326.46 407.33,324.45 406.17,320.77 C405.01,317.09 402.45,299.71 402.45,295.95 Z" fill="#66b3c0" /><path d="M402.45,295.95 C402.45,292.19 404.72,289.75 406.17,288.51 C407.62,287.27 408.92,286.93 414.86,285.28 C420.80,283.63 450.68,275.75 457.05,274.36 C463.42,272.97 467.14,272.88 469.46,273.37 C471.78,273.86 475.61,276.09 476.91,278.58 C478.21,281.07 480.20,291.67 480.63,294.71 C481.06,297.75 481.35,302.67 480.63,304.64 C479.91,306.61 481.51,308.69 474.42,311.59 C467.33,314.49 427.06,327.61 419.82,329.46 C412.58,331.31 413.96,328.48 412.37,327.47 C410.78,326.46 407.33,324.45 406.17,320.77 C405.01,317.09 402.45,299.71 402.45,295.95 Z" fill="none" stroke="#2f7f8c" stroke-width="0.5"/><circle cx="464.0" cy="268.65" r="4.1" fill="#fff" stroke="#2f7f8c" stroke-width="1"/><path d="M426.77,326.48 L468.96,312.58 L478.89,342.37 A20.35,20.35 0 0 0 477.4,382.08 L448.36,405.66 A26.06,26.06 0 0 0 422.55,379.84 C429.0,373.64 434.71,369.17 434.46,360.49 C433.97,351.8 433.22,339.39 426.77,326.48 Z" fill="#3a8f9c" stroke="#2f7f8c" stroke-width="0.4"/><path d="M129.66,471.99 L148.41,520.43 L164.72,494.25 L157.39,524.88 L196.19,519.84 L160.39,535.56 L183.4,558.22 L155.2,543.93 L166.25,596.09 L146.94,546.38 L130.94,574.34 L138.04,542.24 L99.72,548.75 L134.68,531.71 L111.75,510.37 L139.79,522.99 Z" fill="#4f9a36" stroke="#3f8a2e" stroke-width="0.3"/><path d="M299.6,447.2 C300.12,447.20 303.49,454.00 303.98,455.0 C304.47,456.00 306.63,461.35 306.99,462.23 C307.35,463.11 309.00,467.45 309.4,468.25 C309.80,469.05 312.57,473.56 313.01,474.28 C313.45,475.00 316.02,478.66 316.02,479.1 C316.02,479.54 312.89,480.42 313.01,480.9 C313.13,481.38 317.35,485.65 317.83,486.33 C318.31,487.01 320.20,490.66 320.24,491.14 C320.28,491.62 318.27,492.99 318.43,493.55 C318.59,494.11 322.25,498.78 322.65,499.58 C323.05,500.38 324.54,505.12 324.46,505.6 C324.38,506.08 321.33,506.41 321.45,506.81 C321.57,507.21 325.75,510.75 326.27,511.63 C326.79,512.51 329.24,519.42 329.28,520.06 C329.32,520.70 326.75,520.79 326.87,521.27 C326.99,521.75 330.63,526.52 331.08,527.29 C331.53,528.06 333.31,531.97 333.64,532.86 C333.97,533.75 335.94,539.87 335.99,540.71 C336.04,541.55 334.31,544.70 334.42,545.43 C334.53,546.16 337.47,550.98 337.57,551.71 C337.67,552.44 335.94,555.80 335.99,556.43 C336.04,557.06 337.98,560.51 338.35,561.14 C338.72,561.77 341.44,565.33 341.49,565.85 C341.54,566.37 339.09,568.37 339.14,569.0 C339.19,569.63 341.86,574.65 342.28,575.28 C342.70,575.91 345.32,578.01 345.42,578.43 C345.52,578.85 343.64,580.94 343.85,581.57 C344.06,582.20 348.15,587.12 348.57,587.85 C348.99,588.58 349.72,591.84 350.14,592.57 C350.56,593.30 354.75,598.31 354.85,598.85 C354.95,599.39 352.76,600.72 351.71,600.74 C350.66,600.76 340.61,599.38 339.14,599.17 C337.67,598.96 330.97,597.60 329.71,597.6 C328.45,597.60 321.33,599.24 320.28,599.17 C319.23,599.10 315.26,596.50 314.0,596.5 C312.74,596.50 302.79,599.07 301.43,599.17 C300.07,599.27 294.67,598.01 293.57,598.07 C292.47,598.13 285.87,600.16 284.93,600.11 C283.99,600.06 280.43,597.24 279.43,597.28 C278.43,597.32 271.36,600.61 270.0,600.74 C268.64,600.87 260.31,599.03 259.0,599.17 C257.69,599.31 251.04,602.70 250.36,602.78 C249.68,602.86 248.95,601.10 248.79,600.42 C248.63,599.74 247.63,593.30 248.0,592.57 C248.37,591.84 254.08,589.73 254.29,589.42 C254.50,589.11 251.25,588.27 251.14,587.85 C251.03,587.43 252.13,583.87 252.71,583.14 C253.29,582.41 259.68,577.58 259.79,576.85 C259.90,576.12 254.60,572.82 254.29,572.14 C253.98,571.46 254.49,567.11 255.07,566.64 C255.65,566.17 262.77,565.33 262.93,565.07 C263.09,564.81 257.59,563.44 257.43,562.71 C257.27,561.98 259.73,554.86 260.57,554.07 C261.41,553.28 269.90,551.30 270.0,550.93 C270.10,550.56 262.56,549.25 262.14,548.57 C261.72,547.89 263.24,541.71 263.71,540.71 C264.18,539.71 269.21,534.32 269.21,533.64 C269.21,532.96 264.00,530.76 263.71,530.5 C263.42,530.24 264.30,530.16 264.82,529.7 C265.34,529.24 271.29,524.15 271.45,523.67 C271.61,523.19 267.31,522.95 267.23,522.47 C267.15,521.99 269.60,517.33 270.24,516.45 C270.88,515.57 276.71,509.78 276.87,509.22 C277.03,508.66 272.81,508.33 272.65,508.01 C272.49,507.69 273.98,504.96 274.46,504.4 C274.94,503.84 279.80,500.02 279.88,499.58 C279.96,499.14 275.78,498.33 275.66,497.77 C275.54,497.21 277.55,491.90 278.07,491.14 C278.59,490.38 283.37,486.77 283.49,486.33 C283.61,485.89 279.84,485.00 279.88,484.52 C279.92,484.04 283.54,479.78 284.1,479.1 C284.66,478.42 288.19,474.68 288.31,474.28 C288.43,473.88 285.78,473.47 285.9,473.07 C286.02,472.67 289.64,468.97 290.12,468.25 C290.60,467.53 292.73,463.11 293.13,462.23 C293.53,461.35 295.71,456.00 296.14,455.0 C296.57,454.00 299.08,447.20 299.6,447.2 Z" fill="#8cbc41" stroke="#4a8f2f" stroke-width="2.4" stroke-linejoin="round"/><path d="M296.14,469.46 C296.14,468.85 298.26,460.49 298.55,460.42 C298.84,460.35 300.96,467.64 300.96,468.25 C300.96,468.86 298.84,470.59 298.55,470.66 C298.26,470.73 296.14,470.07 296.14,469.46 Z" fill="#4f9a36" stroke="#4a8f2f" stroke-width="1.7" stroke-linejoin="round"/><path d="M289.52,480.9 C289.77,480.47 295.07,475.62 295.54,475.48 C296.01,475.34 297.31,478.09 297.35,478.49 C297.39,478.89 296.50,481.86 296.14,482.11 C295.78,482.36 291.73,482.78 291.33,482.71 C290.93,482.64 289.27,481.33 289.52,480.9 Z" fill="#4f9a36" stroke="#4a8f2f" stroke-width="1.7" stroke-linejoin="round"/><path d="M303.37,474.88 C303.46,474.59 304.93,474.03 305.18,474.28 C305.43,474.53 307.55,478.70 307.59,479.1 C307.63,479.50 306.02,480.90 305.78,480.9 C305.54,480.90 303.75,479.46 303.61,479.1 C303.47,478.74 303.28,475.17 303.37,474.88 Z" fill="#4f9a36" stroke="#4a8f2f" stroke-width="1.7" stroke-linejoin="round"/><path d="M290.72,491.75 C290.86,491.46 295.71,487.64 296.14,487.53 C296.57,487.42 298.09,489.65 297.95,489.94 C297.81,490.23 294.16,492.24 293.73,492.35 C293.30,492.46 290.58,492.04 290.72,491.75 Z" fill="#4f9a36" stroke="#4a8f2f" stroke-width="1.7" stroke-linejoin="round"/><path d="M306.99,491.14 C306.99,490.74 310.09,489.72 310.6,489.94 C311.11,490.16 315.13,494.25 315.42,494.76 C315.71,495.27 315.71,498.26 315.42,498.37 C315.13,498.48 311.11,497.00 310.6,496.57 C310.09,496.14 306.99,491.54 306.99,491.14 Z" fill="#4f9a36" stroke="#4a8f2f" stroke-width="1.7" stroke-linejoin="round"/><path d="M284.7,511.63 C284.84,511.12 287.17,506.25 287.71,505.6 C288.25,504.95 293.22,501.21 293.73,500.78 C294.24,500.35 295.85,498.62 296.14,498.37 C296.43,498.12 298.22,496.28 298.55,496.57 C298.88,496.86 301.03,502.43 301.57,503.19 C302.11,503.95 306.83,508.82 307.59,509.22 C308.35,509.62 313.68,509.60 314.22,509.82 C314.76,510.04 316.70,512.50 316.63,512.83 C316.56,513.16 313.66,515.24 313.01,515.24 C312.36,515.24 306.43,513.34 305.78,512.83 C305.13,512.32 302.53,507.35 302.17,506.81 C301.81,506.27 300.12,503.87 299.76,503.8 C299.40,503.73 296.72,505.13 296.14,505.6 C295.56,506.07 290.77,511.12 290.12,511.63 C289.47,512.14 285.63,514.04 285.3,514.04 C284.97,514.04 284.56,512.14 284.7,511.63 Z" fill="#4f9a36" stroke="#4a8f2f" stroke-width="1.7" stroke-linejoin="round"/><path d="M274.46,527.29 C274.75,526.86 280.68,523.05 281.69,522.47 C282.70,521.89 290.25,517.94 291.33,517.65 C292.41,517.36 299.40,517.47 299.76,517.65 C300.12,517.83 297.86,520.30 297.35,520.66 C296.84,521.02 292.12,523.27 291.33,523.67 C290.53,524.07 284.97,526.93 284.1,527.29 C283.23,527.65 277.45,529.70 276.87,529.7 C276.29,529.70 274.17,527.72 274.46,527.29 Z" fill="#4f9a36" stroke="#4a8f2f" stroke-width="1.7" stroke-linejoin="round"/><path d="M306.99,523.67 C307.06,523.38 311.23,523.53 311.81,523.67 C312.39,523.81 316.20,525.68 316.63,526.08 C317.06,526.48 319.11,529.94 319.04,530.3 C318.97,530.66 315.93,532.22 315.42,532.11 C314.91,532.00 311.11,529.00 310.6,528.49 C310.09,527.98 306.92,523.96 306.99,523.67 Z" fill="#4f9a36" stroke="#4a8f2f" stroke-width="1.7" stroke-linejoin="round"/><path d="M280.21,540.71 C280.49,540.05 287.77,534.30 288.85,533.64 C289.93,532.98 297.24,529.76 298.28,529.71 C299.32,529.66 305.29,532.20 306.14,532.86 C306.99,533.52 312.33,540.14 312.42,540.71 C312.51,541.28 308.56,542.37 307.71,542.28 C306.86,542.19 299.32,539.23 298.28,539.14 C297.24,539.05 291.28,540.38 290.43,540.71 C289.58,541.04 284.75,544.64 284.14,544.64 C283.53,544.64 279.93,541.37 280.21,540.71 Z" fill="#4f9a36" stroke="#4a8f2f" stroke-width="1.7" stroke-linejoin="round"/><path d="M303.0,548.57 C303.38,548.33 310.05,547.09 310.85,547.0 C311.65,546.91 315.78,546.67 316.35,547.0 C316.92,547.33 319.86,551.89 320.28,552.5 C320.70,553.11 323.61,556.93 323.42,557.21 C323.23,557.49 317.89,557.45 317.14,557.21 C316.39,556.97 311.60,553.66 310.85,553.28 C310.10,552.90 305.04,551.21 304.57,550.93 C304.10,550.65 302.62,548.81 303.0,548.57 Z" fill="#4f9a36" stroke="#4a8f2f" stroke-width="1.7" stroke-linejoin="round"/><path d="M273.93,554.86 C274.26,554.53 280.25,551.17 281.0,550.93 C281.75,550.69 286.41,550.74 286.5,550.93 C286.59,551.12 283.23,553.74 282.57,554.07 C281.91,554.40 276.02,556.38 275.5,556.43 C274.98,556.48 273.60,555.19 273.93,554.86 Z" fill="#4f9a36" stroke="#4a8f2f" stroke-width="1.7" stroke-linejoin="round"/><path d="M271.57,569.0 C271.76,568.53 278.39,563.37 279.43,562.71 C280.47,562.05 287.72,558.52 288.85,558.0 C289.98,557.48 297.43,554.02 298.28,554.07 C299.13,554.12 302.15,558.36 303.0,558.78 C303.85,559.20 311.29,560.76 312.42,561.14 C313.55,561.52 321.00,564.65 321.85,565.07 C322.70,565.49 326.76,567.93 326.57,568.21 C326.38,568.49 319.84,569.87 318.71,569.78 C317.58,569.69 308.84,566.97 307.71,566.64 C306.58,566.31 300.79,564.47 299.85,564.28 C298.91,564.09 292.85,563.31 292.0,563.5 C291.15,563.69 286.65,567.01 285.71,567.43 C284.77,567.85 277.13,570.48 276.28,570.57 C275.43,570.66 271.38,569.47 271.57,569.0 Z" fill="#4f9a36" stroke="#4a8f2f" stroke-width="1.7" stroke-linejoin="round"/><path d="M295.14,569.0 C295.28,568.58 297.81,567.24 298.28,567.43 C298.75,567.62 302.62,571.57 303.0,572.14 C303.38,572.71 304.76,576.47 304.57,576.85 C304.38,577.23 300.37,578.57 299.85,578.43 C299.33,578.29 296.21,575.07 295.93,574.5 C295.65,573.93 295.00,569.42 295.14,569.0 Z" fill="#4f9a36" stroke="#4a8f2f" stroke-width="1.7" stroke-linejoin="round"/><path d="M317.14,572.14 C317.38,571.90 321.19,571.90 321.85,572.14 C322.51,572.38 327.67,575.65 328.14,576.07 C328.61,576.49 329.99,579.02 329.71,579.21 C329.43,579.40 324.13,579.40 323.42,579.21 C322.71,579.02 318.30,576.49 317.92,576.07 C317.54,575.65 316.90,572.38 317.14,572.14 Z" fill="#4f9a36" stroke="#4a8f2f" stroke-width="1.7" stroke-linejoin="round"/><path d="M266.07,587.07 C266.35,586.60 272.48,580.19 273.14,580.0 C273.80,579.81 276.88,583.55 277.07,583.93 C277.26,584.31 276.80,586.04 276.28,586.28 C275.76,586.52 269.04,587.80 268.43,587.85 C267.82,587.90 265.79,587.54 266.07,587.07 Z" fill="#4f9a36" stroke="#4a8f2f" stroke-width="1.7" stroke-linejoin="round"/><path d="M281.78,585.5 C282.06,584.98 287.50,578.67 288.07,578.43 C288.64,578.19 291.02,581.10 291.21,581.57 C291.40,582.04 291.68,585.95 291.21,586.28 C290.74,586.61 283.93,587.12 283.36,587.07 C282.79,587.02 281.50,586.02 281.78,585.5 Z" fill="#4f9a36" stroke="#4a8f2f" stroke-width="1.7" stroke-linejoin="round"/><path d="M296.71,586.28 C296.76,585.95 302.15,582.68 303.0,582.35 C303.85,582.02 309.95,580.83 310.85,580.78 C311.75,580.73 317.54,581.33 317.92,581.57 C318.30,581.81 317.56,584.38 317.14,584.71 C316.72,585.04 311.75,586.88 310.85,587.07 C309.95,587.26 303.06,587.90 302.21,587.85 C301.36,587.80 296.66,586.61 296.71,586.28 Z" fill="#4f9a36" stroke="#4a8f2f" stroke-width="1.7" stroke-linejoin="round"/><path d="M324.21,587.85 C324.63,587.61 332.14,585.88 332.85,585.5 C333.56,585.12 335.52,581.62 335.99,581.57 C336.46,581.52 340.38,584.14 340.71,584.71 C341.04,585.28 341.96,590.62 341.49,591.0 C341.02,591.38 333.79,591.09 332.85,591.0 C331.91,590.91 326.30,589.61 325.78,589.42 C325.26,589.23 323.79,588.09 324.21,587.85 Z" fill="#4f9a36" stroke="#4a8f2f" stroke-width="1.7" stroke-linejoin="round"/><path d="M443.47,494.51 L450.58,494.51 L456.12,504.79 L461.66,512.7 L459.28,514.28 L456.91,515.86 L465.61,528.52 L471.14,538.8 L469.56,540.38 L462.45,541.17 L468.77,552.24 L474.31,563.31 L473.52,565.68 L454.54,565.68 L453.75,571.22 L440.3,571.22 L440.3,565.68 L419.74,565.68 L418.95,564.1 L425.28,553.03 L431.61,541.17 L424.49,540.38 L422.12,538.8 L429.23,528.52 L436.35,515.86 L432.4,514.28 L431.61,512.7 L437.93,505.58 Z" fill="#4f9a36" stroke="#3f8a2e" stroke-width="0.4" stroke-linejoin="round"/><path d="M447.11,477.21 L449.87,482.81 L456.05,483.71 L451.58,488.06 L452.64,494.21 L447.11,491.31 L441.58,494.21 L442.64,488.06 L438.17,483.71 L444.35,482.81 Z" fill="#4f9a36" stroke="#3f8a2e" stroke-width="0.4" stroke-linejoin="round"/><rect x="405.9" y="446.3" width="81.2" height="154.5" fill="none" stroke="#8a8a8a" stroke-width="0.6"/><rect x="403.29999999999995" y="443.7" width="5.2" height="5.2" fill="#fff" stroke="#888" stroke-width="0.6"/><rect x="484.5" y="443.7" width="5.2" height="5.2" fill="#fff" stroke="#888" stroke-width="0.6"/><rect x="403.29999999999995" y="598.1999999999999" width="5.2" height="5.2" fill="#fff" stroke="#888" stroke-width="0.6"/><rect x="484.5" y="598.1999999999999" width="5.2" height="5.2" fill="#fff" stroke="#888" stroke-width="0.6"/><path d="M447,517 V537 M437,524 H457" stroke="#b9c98f" stroke-width="0.5" stroke-dasharray="0.6,1.2"/><rect x="423" y="428.6" width="47.8" height="10" rx="1.5" fill="#222"/><text x="446.9" y="435.7" font-size="5.3" fill="#fff" text-anchor="middle" style="white-space:pre">1.58  in x 3  in</text><rect x="32.5" y="47.3" width="523" height="10.7" fill="#f5f5f5"/><rect x="32.5" y="47.3" width="10.9" height="617" fill="#f5f5f5"/><line x1="32.5" y1="47.6" x2="556" y2="47.6" stroke="#e2e2e2" stroke-width="0.8"/><line x1="43.4" y1="58" x2="556" y2="58" stroke="#dddddd" stroke-width="0.8"/><line x1="43.4" y1="47.3" x2="43.4" y2="664" stroke="#dddddd" stroke-width="0.8"/><line x1="48.39" y1="56.4" x2="48.39" y2="58" stroke="#cfcfcf" stroke-width="0.7"/><line x1="54.86" y1="55.5" x2="54.86" y2="58" stroke="#cfcfcf" stroke-width="0.7"/><line x1="61.33" y1="56.4" x2="61.33" y2="58" stroke="#cfcfcf" stroke-width="0.7"/><line x1="67.79" y1="56.4" x2="67.79" y2="58" stroke="#cfcfcf" stroke-width="0.7"/><line x1="74.25" y1="56.4" x2="74.25" y2="58" stroke="#cfcfcf" stroke-width="0.7"/><line x1="80.72" y1="47.5" x2="80.72" y2="58" stroke="#cfcfcf" stroke-width="0.8"/><line x1="87.19" y1="56.4" x2="87.19" y2="58" stroke="#cfcfcf" stroke-width="0.7"/><line x1="93.65" y1="56.4" x2="93.65" y2="58" stroke="#cfcfcf" stroke-width="0.7"/><line x1="100.11" y1="56.4" x2="100.11" y2="58" stroke="#cfcfcf" stroke-width="0.7"/><line x1="106.58" y1="55.5" x2="106.58" y2="58" stroke="#cfcfcf" stroke-width="0.7"/><line x1="113.05" y1="56.4" x2="113.05" y2="58" stroke="#cfcfcf" stroke-width="0.7"/><line x1="119.51" y1="56.4" x2="119.51" y2="58" stroke="#cfcfcf" stroke-width="0.7"/><line x1="125.97" y1="56.4" x2="125.97" y2="58" stroke="#cfcfcf" stroke-width="0.7"/><line x1="132.44" y1="47.5" x2="132.44" y2="58" stroke="#cfcfcf" stroke-width="0.8"/><line x1="138.91" y1="56.4" x2="138.91" y2="58" stroke="#cfcfcf" stroke-width="0.7"/><line x1="145.37" y1="56.4" x2="145.37" y2="58" stroke="#cfcfcf" stroke-width="0.7"/><line x1="151.83" y1="56.4" x2="151.83" y2="58" stroke="#cfcfcf" stroke-width="0.7"/><line x1="158.30" y1="55.5" x2="158.30" y2="58" stroke="#cfcfcf" stroke-width="0.7"/><line x1="164.76" y1="56.4" x2="164.76" y2="58" stroke="#cfcfcf" stroke-width="0.7"/><line x1="171.23" y1="56.4" x2="171.23" y2="58" stroke="#cfcfcf" stroke-width="0.7"/><line x1="177.69" y1="56.4" x2="177.69" y2="58" stroke="#cfcfcf" stroke-width="0.7"/><line x1="184.16" y1="47.5" x2="184.16" y2="58" stroke="#cfcfcf" stroke-width="0.8"/><line x1="190.62" y1="56.4" x2="190.62" y2="58" stroke="#cfcfcf" stroke-width="0.7"/><line x1="197.09" y1="56.4" x2="197.09" y2="58" stroke="#cfcfcf" stroke-width="0.7"/><line x1="203.56" y1="56.4" x2="203.56" y2="58" stroke="#cfcfcf" stroke-width="0.7"/><line x1="210.02" y1="55.5" x2="210.02" y2="58" stroke="#cfcfcf" stroke-width="0.7"/><line x1="216.48" y1="56.4" x2="216.48" y2="58" stroke="#cfcfcf" stroke-width="0.7"/><line x1="222.95" y1="56.4" x2="222.95" y2="58" stroke="#cfcfcf" stroke-width="0.7"/><line x1="229.41" y1="56.4" x2="229.41" y2="58" stroke="#cfcfcf" stroke-width="0.7"/><line x1="235.88" y1="47.5" x2="235.88" y2="58" stroke="#cfcfcf" stroke-width="0.8"/><line x1="242.34" y1="56.4" x2="242.34" y2="58" stroke="#cfcfcf" stroke-width="0.7"/><line x1="248.81" y1="56.4" x2="248.81" y2="58" stroke="#cfcfcf" stroke-width="0.7"/><line x1="255.28" y1="56.4" x2="255.28" y2="58" stroke="#cfcfcf" stroke-width="0.7"/><line x1="261.74" y1="55.5" x2="261.74" y2="58" stroke="#cfcfcf" stroke-width="0.7"/><line x1="268.20" y1="56.4" x2="268.20" y2="58" stroke="#cfcfcf" stroke-width="0.7"/><line x1="274.67" y1="56.4" x2="274.67" y2="58" stroke="#cfcfcf" stroke-width="0.7"/><line x1="281.13" y1="56.4" x2="281.13" y2="58" stroke="#cfcfcf" stroke-width="0.7"/><line x1="287.60" y1="47.5" x2="287.60" y2="58" stroke="#cfcfcf" stroke-width="0.8"/><line x1="294.06" y1="56.4" x2="294.06" y2="58" stroke="#cfcfcf" stroke-width="0.7"/><line x1="300.53" y1="56.4" x2="300.53" y2="58" stroke="#cfcfcf" stroke-width="0.7"/><line x1="307.00" y1="56.4" x2="307.00" y2="58" stroke="#cfcfcf" stroke-width="0.7"/><line x1="313.46" y1="55.5" x2="313.46" y2="58" stroke="#cfcfcf" stroke-width="0.7"/><line x1="319.92" y1="56.4" x2="319.92" y2="58" stroke="#cfcfcf" stroke-width="0.7"/><line x1="326.39" y1="56.4" x2="326.39" y2="58" stroke="#cfcfcf" stroke-width="0.7"/><line x1="332.86" y1="56.4" x2="332.86" y2="58" stroke="#cfcfcf" stroke-width="0.7"/><line x1="339.32" y1="47.5" x2="339.32" y2="58" stroke="#cfcfcf" stroke-width="0.8"/><line x1="345.78" y1="56.4" x2="345.78" y2="58" stroke="#cfcfcf" stroke-width="0.7"/><line x1="352.25" y1="56.4" x2="352.25" y2="58" stroke="#cfcfcf" stroke-width="0.7"/><line x1="358.72" y1="56.4" x2="358.72" y2="58" stroke="#cfcfcf" stroke-width="0.7"/><line x1="365.18" y1="55.5" x2="365.18" y2="58" stroke="#cfcfcf" stroke-width="0.7"/><line x1="371.64" y1="56.4" x2="371.64" y2="58" stroke="#cfcfcf" stroke-width="0.7"/><line x1="378.11" y1="56.4" x2="378.11" y2="58" stroke="#cfcfcf" stroke-width="0.7"/><line x1="384.58" y1="56.4" x2="384.58" y2="58" stroke="#cfcfcf" stroke-width="0.7"/><line x1="391.04" y1="47.5" x2="391.04" y2="58" stroke="#cfcfcf" stroke-width="0.8"/><line x1="397.50" y1="56.4" x2="397.50" y2="58" stroke="#cfcfcf" stroke-width="0.7"/><line x1="403.97" y1="56.4" x2="403.97" y2="58" stroke="#cfcfcf" stroke-width="0.7"/><line x1="410.43" y1="56.4" x2="410.43" y2="58" stroke="#cfcfcf" stroke-width="0.7"/><line x1="416.90" y1="55.5" x2="416.90" y2="58" stroke="#cfcfcf" stroke-width="0.7"/><line x1="423.37" y1="56.4" x2="423.37" y2="58" stroke="#cfcfcf" stroke-width="0.7"/><line x1="429.83" y1="56.4" x2="429.83" y2="58" stroke="#cfcfcf" stroke-width="0.7"/><line x1="436.29" y1="56.4" x2="436.29" y2="58" stroke="#cfcfcf" stroke-width="0.7"/><line x1="442.76" y1="47.5" x2="442.76" y2="58" stroke="#cfcfcf" stroke-width="0.8"/><line x1="449.23" y1="56.4" x2="449.23" y2="58" stroke="#cfcfcf" stroke-width="0.7"/><line x1="455.69" y1="56.4" x2="455.69" y2="58" stroke="#cfcfcf" stroke-width="0.7"/><line x1="462.15" y1="56.4" x2="462.15" y2="58" stroke="#cfcfcf" stroke-width="0.7"/><line x1="468.62" y1="55.5" x2="468.62" y2="58" stroke="#cfcfcf" stroke-width="0.7"/><line x1="475.09" y1="56.4" x2="475.09" y2="58" stroke="#cfcfcf" stroke-width="0.7"/><line x1="481.55" y1="56.4" x2="481.55" y2="58" stroke="#cfcfcf" stroke-width="0.7"/><line x1="488.01" y1="56.4" x2="488.01" y2="58" stroke="#cfcfcf" stroke-width="0.7"/><line x1="494.48" y1="47.5" x2="494.48" y2="58" stroke="#cfcfcf" stroke-width="0.8"/><line x1="500.94" y1="56.4" x2="500.94" y2="58" stroke="#cfcfcf" stroke-width="0.7"/><line x1="507.41" y1="56.4" x2="507.41" y2="58" stroke="#cfcfcf" stroke-width="0.7"/><line x1="513.88" y1="56.4" x2="513.88" y2="58" stroke="#cfcfcf" stroke-width="0.7"/><line x1="520.34" y1="55.5" x2="520.34" y2="58" stroke="#cfcfcf" stroke-width="0.7"/><line x1="526.80" y1="56.4" x2="526.80" y2="58" stroke="#cfcfcf" stroke-width="0.7"/><line x1="533.27" y1="56.4" x2="533.27" y2="58" stroke="#cfcfcf" stroke-width="0.7"/><line x1="539.74" y1="56.4" x2="539.74" y2="58" stroke="#cfcfcf" stroke-width="0.7"/><line x1="546.20" y1="47.5" x2="546.20" y2="58" stroke="#cfcfcf" stroke-width="0.8"/><line x1="552.66" y1="56.4" x2="552.66" y2="58" stroke="#cfcfcf" stroke-width="0.7"/><line x1="41.8" y1="63.73" x2="43.4" y2="63.73" stroke="#cfcfcf" stroke-width="0.7"/><line x1="41.8" y1="70.19" x2="43.4" y2="70.19" stroke="#cfcfcf" stroke-width="0.7"/><line x1="41.8" y1="76.66" x2="43.4" y2="76.66" stroke="#cfcfcf" stroke-width="0.7"/><line x1="40.9" y1="83.12" x2="43.4" y2="83.12" stroke="#cfcfcf" stroke-width="0.7"/><line x1="41.8" y1="89.59" x2="43.4" y2="89.59" stroke="#cfcfcf" stroke-width="0.7"/><line x1="41.8" y1="96.05" x2="43.4" y2="96.05" stroke="#cfcfcf" stroke-width="0.7"/><line x1="41.8" y1="102.52" x2="43.4" y2="102.52" stroke="#cfcfcf" stroke-width="0.7"/><line x1="32.5" y1="108.98" x2="43.4" y2="108.98" stroke="#cfcfcf" stroke-width="0.8"/><line x1="41.8" y1="115.45" x2="43.4" y2="115.45" stroke="#cfcfcf" stroke-width="0.7"/><line x1="41.8" y1="121.91" x2="43.4" y2="121.91" stroke="#cfcfcf" stroke-width="0.7"/><line x1="41.8" y1="128.38" x2="43.4" y2="128.38" stroke="#cfcfcf" stroke-width="0.7"/><line x1="40.9" y1="134.84" x2="43.4" y2="134.84" stroke="#cfcfcf" stroke-width="0.7"/><line x1="41.8" y1="141.31" x2="43.4" y2="141.31" stroke="#cfcfcf" stroke-width="0.7"/><line x1="41.8" y1="147.77" x2="43.4" y2="147.77" stroke="#cfcfcf" stroke-width="0.7"/><line x1="41.8" y1="154.24" x2="43.4" y2="154.24" stroke="#cfcfcf" stroke-width="0.7"/><line x1="32.5" y1="160.70" x2="43.4" y2="160.70" stroke="#cfcfcf" stroke-width="0.8"/><line x1="41.8" y1="167.17" x2="43.4" y2="167.17" stroke="#cfcfcf" stroke-width="0.7"/><line x1="41.8" y1="173.63" x2="43.4" y2="173.63" stroke="#cfcfcf" stroke-width="0.7"/><line x1="41.8" y1="180.10" x2="43.4" y2="180.10" stroke="#cfcfcf" stroke-width="0.7"/><line x1="40.9" y1="186.56" x2="43.4" y2="186.56" stroke="#cfcfcf" stroke-width="0.7"/><line x1="41.8" y1="193.03" x2="43.4" y2="193.03" stroke="#cfcfcf" stroke-width="0.7"/><line x1="41.8" y1="199.49" x2="43.4" y2="199.49" stroke="#cfcfcf" stroke-width="0.7"/><line x1="41.8" y1="205.96" x2="43.4" y2="205.96" stroke="#cfcfcf" stroke-width="0.7"/><line x1="32.5" y1="212.42" x2="43.4" y2="212.42" stroke="#cfcfcf" stroke-width="0.8"/><line x1="41.8" y1="218.89" x2="43.4" y2="218.89" stroke="#cfcfcf" stroke-width="0.7"/><line x1="41.8" y1="225.35" x2="43.4" y2="225.35" stroke="#cfcfcf" stroke-width="0.7"/><line x1="41.8" y1="231.82" x2="43.4" y2="231.82" stroke="#cfcfcf" stroke-width="0.7"/><line x1="40.9" y1="238.28" x2="43.4" y2="238.28" stroke="#cfcfcf" stroke-width="0.7"/><line x1="41.8" y1="244.75" x2="43.4" y2="244.75" stroke="#cfcfcf" stroke-width="0.7"/><line x1="41.8" y1="251.21" x2="43.4" y2="251.21" stroke="#cfcfcf" stroke-width="0.7"/><line x1="41.8" y1="257.68" x2="43.4" y2="257.68" stroke="#cfcfcf" stroke-width="0.7"/><line x1="32.5" y1="264.14" x2="43.4" y2="264.14" stroke="#cfcfcf" stroke-width="0.8"/><line x1="41.8" y1="270.61" x2="43.4" y2="270.61" stroke="#cfcfcf" stroke-width="0.7"/><line x1="41.8" y1="277.07" x2="43.4" y2="277.07" stroke="#cfcfcf" stroke-width="0.7"/><line x1="41.8" y1="283.54" x2="43.4" y2="283.54" stroke="#cfcfcf" stroke-width="0.7"/><line x1="40.9" y1="290.00" x2="43.4" y2="290.00" stroke="#cfcfcf" stroke-width="0.7"/><line x1="41.8" y1="296.47" x2="43.4" y2="296.47" stroke="#cfcfcf" stroke-width="0.7"/><line x1="41.8" y1="302.93" x2="43.4" y2="302.93" stroke="#cfcfcf" stroke-width="0.7"/><line x1="41.8" y1="309.40" x2="43.4" y2="309.40" stroke="#cfcfcf" stroke-width="0.7"/><line x1="32.5" y1="315.86" x2="43.4" y2="315.86" stroke="#cfcfcf" stroke-width="0.8"/><line x1="41.8" y1="322.33" x2="43.4" y2="322.33" stroke="#cfcfcf" stroke-width="0.7"/><line x1="41.8" y1="328.79" x2="43.4" y2="328.79" stroke="#cfcfcf" stroke-width="0.7"/><line x1="41.8" y1="335.26" x2="43.4" y2="335.26" stroke="#cfcfcf" stroke-width="0.7"/><line x1="40.9" y1="341.72" x2="43.4" y2="341.72" stroke="#cfcfcf" stroke-width="0.7"/><line x1="41.8" y1="348.19" x2="43.4" y2="348.19" stroke="#cfcfcf" stroke-width="0.7"/><line x1="41.8" y1="354.65" x2="43.4" y2="354.65" stroke="#cfcfcf" stroke-width="0.7"/><line x1="41.8" y1="361.12" x2="43.4" y2="361.12" stroke="#cfcfcf" stroke-width="0.7"/><line x1="32.5" y1="367.58" x2="43.4" y2="367.58" stroke="#cfcfcf" stroke-width="0.8"/><line x1="41.8" y1="374.05" x2="43.4" y2="374.05" stroke="#cfcfcf" stroke-width="0.7"/><line x1="41.8" y1="380.51" x2="43.4" y2="380.51" stroke="#cfcfcf" stroke-width="0.7"/><line x1="41.8" y1="386.98" x2="43.4" y2="386.98" stroke="#cfcfcf" stroke-width="0.7"/><line x1="40.9" y1="393.44" x2="43.4" y2="393.44" stroke="#cfcfcf" stroke-width="0.7"/><line x1="41.8" y1="399.91" x2="43.4" y2="399.91" stroke="#cfcfcf" stroke-width="0.7"/><line x1="41.8" y1="406.37" x2="43.4" y2="406.37" stroke="#cfcfcf" stroke-width="0.7"/><line x1="41.8" y1="412.84" x2="43.4" y2="412.84" stroke="#cfcfcf" stroke-width="0.7"/><line x1="32.5" y1="419.30" x2="43.4" y2="419.30" stroke="#cfcfcf" stroke-width="0.8"/><line x1="41.8" y1="425.77" x2="43.4" y2="425.77" stroke="#cfcfcf" stroke-width="0.7"/><line x1="41.8" y1="432.23" x2="43.4" y2="432.23" stroke="#cfcfcf" stroke-width="0.7"/><line x1="41.8" y1="438.70" x2="43.4" y2="438.70" stroke="#cfcfcf" stroke-width="0.7"/><line x1="40.9" y1="445.16" x2="43.4" y2="445.16" stroke="#cfcfcf" stroke-width="0.7"/><line x1="41.8" y1="451.63" x2="43.4" y2="451.63" stroke="#cfcfcf" stroke-width="0.7"/><line x1="41.8" y1="458.09" x2="43.4" y2="458.09" stroke="#cfcfcf" stroke-width="0.7"/><line x1="41.8" y1="464.56" x2="43.4" y2="464.56" stroke="#cfcfcf" stroke-width="0.7"/><line x1="32.5" y1="471.02" x2="43.4" y2="471.02" stroke="#cfcfcf" stroke-width="0.8"/><line x1="41.8" y1="477.49" x2="43.4" y2="477.49" stroke="#cfcfcf" stroke-width="0.7"/><line x1="41.8" y1="483.95" x2="43.4" y2="483.95" stroke="#cfcfcf" stroke-width="0.7"/><line x1="41.8" y1="490.42" x2="43.4" y2="490.42" stroke="#cfcfcf" stroke-width="0.7"/><line x1="40.9" y1="496.88" x2="43.4" y2="496.88" stroke="#cfcfcf" stroke-width="0.7"/><line x1="41.8" y1="503.35" x2="43.4" y2="503.35" stroke="#cfcfcf" stroke-width="0.7"/><line x1="41.8" y1="509.81" x2="43.4" y2="509.81" stroke="#cfcfcf" stroke-width="0.7"/><line x1="41.8" y1="516.28" x2="43.4" y2="516.28" stroke="#cfcfcf" stroke-width="0.7"/><line x1="32.5" y1="522.74" x2="43.4" y2="522.74" stroke="#cfcfcf" stroke-width="0.8"/><line x1="41.8" y1="529.21" x2="43.4" y2="529.21" stroke="#cfcfcf" stroke-width="0.7"/><line x1="41.8" y1="535.67" x2="43.4" y2="535.67" stroke="#cfcfcf" stroke-width="0.7"/><line x1="41.8" y1="542.13" x2="43.4" y2="542.13" stroke="#cfcfcf" stroke-width="0.7"/><line x1="40.9" y1="548.60" x2="43.4" y2="548.60" stroke="#cfcfcf" stroke-width="0.7"/><line x1="41.8" y1="555.07" x2="43.4" y2="555.07" stroke="#cfcfcf" stroke-width="0.7"/><line x1="41.8" y1="561.53" x2="43.4" y2="561.53" stroke="#cfcfcf" stroke-width="0.7"/><line x1="41.8" y1="568.00" x2="43.4" y2="568.00" stroke="#cfcfcf" stroke-width="0.7"/><line x1="32.5" y1="574.46" x2="43.4" y2="574.46" stroke="#cfcfcf" stroke-width="0.8"/><line x1="41.8" y1="580.92" x2="43.4" y2="580.92" stroke="#cfcfcf" stroke-width="0.7"/><line x1="41.8" y1="587.39" x2="43.4" y2="587.39" stroke="#cfcfcf" stroke-width="0.7"/><line x1="41.8" y1="593.86" x2="43.4" y2="593.86" stroke="#cfcfcf" stroke-width="0.7"/><line x1="40.9" y1="600.32" x2="43.4" y2="600.32" stroke="#cfcfcf" stroke-width="0.7"/><line x1="41.8" y1="606.79" x2="43.4" y2="606.79" stroke="#cfcfcf" stroke-width="0.7"/><line x1="41.8" y1="613.25" x2="43.4" y2="613.25" stroke="#cfcfcf" stroke-width="0.7"/><line x1="41.8" y1="619.72" x2="43.4" y2="619.72" stroke="#cfcfcf" stroke-width="0.7"/><line x1="32.5" y1="626.18" x2="43.4" y2="626.18" stroke="#cfcfcf" stroke-width="0.8"/><line x1="41.8" y1="632.64" x2="43.4" y2="632.64" stroke="#cfcfcf" stroke-width="0.7"/><line x1="41.8" y1="639.11" x2="43.4" y2="639.11" stroke="#cfcfcf" stroke-width="0.7"/><line x1="41.8" y1="645.58" x2="43.4" y2="645.58" stroke="#cfcfcf" stroke-width="0.7"/><line x1="40.9" y1="652.04" x2="43.4" y2="652.04" stroke="#cfcfcf" stroke-width="0.7"/><line x1="41.8" y1="658.51" x2="43.4" y2="658.51" stroke="#cfcfcf" stroke-width="0.7"/><text x="82.72" y="54" font-size="5.6" fill="#6e6e6e">5</text><text x="134.44" y="54" font-size="5.6" fill="#6e6e6e">6</text><text x="186.16" y="54" font-size="5.6" fill="#6e6e6e">7</text><text x="237.88" y="54" font-size="5.6" fill="#6e6e6e">8</text><text x="289.60" y="54" font-size="5.6" fill="#6e6e6e">9</text><text x="341.32" y="54" font-size="5.6" fill="#6e6e6e">10</text><text x="393.04" y="54" font-size="5.6" fill="#6e6e6e">11</text><text x="444.76" y="54" font-size="5.6" fill="#6e6e6e">12</text><text x="496.48" y="54" font-size="5.6" fill="#6e6e6e">13</text><text x="548.20" y="54" font-size="5.6" fill="#6e6e6e">14</text><text transform="translate(39.3,58.86) rotate(-90)" font-size="5.6" fill="#6e6e6e" text-anchor="end">4</text><text transform="translate(39.3,110.58) rotate(-90)" font-size="5.6" fill="#6e6e6e" text-anchor="end">5</text><text transform="translate(39.3,162.30) rotate(-90)" font-size="5.6" fill="#6e6e6e" text-anchor="end">6</text><text transform="translate(39.3,214.02) rotate(-90)" font-size="5.6" fill="#6e6e6e" text-anchor="end">7</text><text transform="translate(39.3,265.74) rotate(-90)" font-size="5.6" fill="#6e6e6e" text-anchor="end">8</text><text transform="translate(39.3,317.46) rotate(-90)" font-size="5.6" fill="#6e6e6e" text-anchor="end">9</text><text transform="translate(39.3,369.18) rotate(-90)" font-size="5.6" fill="#6e6e6e" text-anchor="end">10</text><text transform="translate(39.3,420.90) rotate(-90)" font-size="5.6" fill="#6e6e6e" text-anchor="end">11</text><text transform="translate(39.3,472.62) rotate(-90)" font-size="5.6" fill="#6e6e6e" text-anchor="end">12</text><text transform="translate(39.3,524.34) rotate(-90)" font-size="5.6" fill="#6e6e6e" text-anchor="end">13</text><text transform="translate(39.3,576.06) rotate(-90)" font-size="5.6" fill="#6e6e6e" text-anchor="end">14</text><text transform="translate(39.3,627.78) rotate(-90)" font-size="5.6" fill="#6e6e6e" text-anchor="end">15</text></svg>
<svg class="a" style="left:0;top:0" width="700" height="664" viewBox="0 0 700 664"><rect x="0" y="0" width="700" height="23.4" fill="#41464a"/><rect x="0" y="0" width="700" height="0.8" fill="#33373a"/><rect x="10" y="7.949999999999999" width="11.7" height="1.3" fill="#e4e4e4"/><rect x="10" y="11.15" width="11.7" height="1.3" fill="#e4e4e4"/><rect x="10" y="14.35" width="11.7" height="1.3" fill="#e4e4e4"/><text x="32.6" y="14.5" font-size="7.8" fill="#f0f0f0" text-anchor="start" font-weight="normal" >Canvas</text><text x="229.6" y="14.6" font-size="8.1" fill="#f0f0f0" text-anchor="middle" font-weight="normal" >Untitled*</text><text x="400.6" y="14.5" font-size="7.8" fill="#f0f0f0" text-anchor="start" font-weight="normal" >Learning Plan</text><rect x="461.4" y="8" width="0.8" height="7.5" fill="#bdbdbd"/><path d="M478.6,15.6 L486,15.6 L485,13.8 L485,11 Q485,8.2 482.3,8.2 Q479.6,8.2 479.6,11 L479.6,13.8 Z" fill="none" stroke="#e8e8e8" stroke-width="0.9"/><path d="M481,16.6 Q482.3,18.2 483.6,16.6" fill="none" stroke="#e8e8e8" stroke-width="0.8"/><ellipse cx="483.4" cy="5.3" rx="4.4" ry="3.5" fill="#d23a2e"/><text x="483.4" y="6.9" font-size="4.4" fill="#fff" text-anchor="middle" font-weight="bold" >99</text><text x="493.1" y="14.5" font-size="7.8" fill="#f0f0f0" text-anchor="start" font-weight="normal" >My Projects</text><text x="540.9" y="14.5" font-size="7.8" fill="#f0f0f0" text-anchor="start" font-weight="normal" >Save</text><rect x="569.8" y="8" width="0.8" height="7.5" fill="#bdbdbd"/><text x="583" y="14.5" font-size="7.8" fill="#f0f0f0" text-anchor="start" font-weight="normal" >Maker 3</text><path d="M615.8,11.3 L618.9,14.2 L622,11.3" fill="none" stroke="#e8e8e8" stroke-width="0.9"/><rect x="631" y="6.2" width="62.6" height="11.6" rx="5.8" fill="#15a06c"/><text x="662.3" y="13.9" font-size="5.0" fill="#ffffff" text-anchor="middle" font-weight="bold" >Make It</text><rect x="0" y="23.4" width="32.5" height="641" fill="#d9d9d9"/><circle cx="15.8" cy="34.9" r="4.7" fill="none" stroke="#505050" stroke-width="0.8"/><path d="M15.8,32.3 V37.5 M13.200000000000001,34.9 H18.400000000000002" stroke="#505050" stroke-width="0.8"/><text x="15.8" y="48.2" font-size="5.0" fill="#555" text-anchor="middle" font-weight="normal" >New</text><path d="M12.8,64.4 L14.2,63.8 Q15.8,65.2 17.4,63.8 L18.8,64.4 L20.6,66.2 L19.3,67.6 L18.6,67.2 L18.6,72.2 L13,72.2 L13,67.2 L12.3,67.6 L11,66.2 Z" fill="none" stroke="#505050" stroke-width="0.8" stroke-linejoin="round"/><text x="15.8" y="81.6" font-size="5.0" fill="#555" text-anchor="middle" font-weight="normal" >Templates</text><rect x="12.6" y="97.2" width="6.4" height="8.8" rx="0.8" fill="none" stroke="#505050" stroke-width="0.8"/><path d="M14.2,97.2 L14.2,96.2 L17.4,96.2 L17.4,97.2" fill="none" stroke="#505050" stroke-width="0.7"/><circle cx="15.8" cy="100.6" r="1.5" fill="none" stroke="#505050" stroke-width="0.6"/><path d="M14.2,103.8 H17.4" stroke="#505050" stroke-width="0.6"/><text x="15.8" y="115.0" font-size="5.0" fill="#555" text-anchor="middle" font-weight="normal" >Projects</text><path d="M14.6,130.6 L11.2,136.4 L18,136.4 Z" fill="none" stroke="#505050" stroke-width="0.8" stroke-linejoin="round"/><path d="M15.8,136.4 A3.2,3.2 0 1 0 18.6,134.2" fill="none" stroke="#505050" stroke-width="0.8"/><text x="15.8" y="148.6" font-size="5.0" fill="#555" text-anchor="middle" font-weight="normal" >Shapes</text><path d="M15.8,163.6 C12.6,163.6 12.2,167.8 14,170.6 L14.6,171.8 L17,171.8 L17.6,170.6 C19.4,167.8 19,163.6 15.8,163.6 Z" fill="none" stroke="#505050" stroke-width="0.8"/><path d="M15,165.2 V170.4 M16.6,165.2 V170.4" stroke="#505050" stroke-width="0.5"/><rect x="14.7" y="172.4" width="2.2" height="1.2" fill="#505050"/><text x="15.8" y="182.1" font-size="5.0" fill="#555" text-anchor="middle" font-weight="normal" >Images</text><text x="15.8" y="206.0" font-size="10.5" fill="#4a4a4a" text-anchor="middle" font-weight="normal" font-family="Liberation Serif">T</text><text x="15.8" y="215.5" font-size="5.0" fill="#555" text-anchor="middle" font-weight="normal" >Text</text><path d="M12.6,237.6 A4.2,3.9 0 1 1 15.8,239 L19.2,239.4 L18.4,237.6" fill="none" stroke="#505050" stroke-width="0.8"/><path d="M13.8,234.2 H17.8 M13.8,236 H17.8" stroke="#505050" stroke-width="0.6"/><text x="15.8" y="248.7" font-size="5.0" fill="#555" text-anchor="middle" font-weight="normal" >Phrases</text><path d="M13.2,263 V270 M18.4,263 V270 M12.6,269.6 H19 M12.6,263.6 H14.2" stroke="#505050" stroke-width="0.8" fill="none"/><circle cx="13.2" cy="269.6" r="0.9" fill="#505050"/><circle cx="18.4" cy="269.6" r="0.9" fill="#505050"/><circle cx="18.4" cy="263.4" r="0.9" fill="#505050"/><path d="M13.2,261.2 V264.4 M11.8,262.6 H14.6" stroke="#505050" stroke-width="0.7"/><text x="15.8" y="280.7" font-size="5.0" fill="#555" text-anchor="middle" font-weight="normal" >Editable</text><text x="15.8" y="287.6" font-size="5.0" fill="#555" text-anchor="middle" font-weight="normal" >Images</text><path d="M12.2,297.6 H19.4 M15.8,306.4 V299.6 M13.2,302.2 L15.8,299.6 L18.4,302.2" fill="none" stroke="#505050" stroke-width="0.8"/><text x="15.8" y="315.3" font-size="5.0" fill="#555" text-anchor="middle" font-weight="normal" >Upload</text><text x="15.8" y="340.4" font-size="8.2" fill="#4a4a4a" text-anchor="middle" font-weight="bold" font-family="Liberation Serif" letter-spacing="-1.5">MG</text><text x="15.8" y="349.0" font-size="5.0" fill="#555" text-anchor="middle" font-weight="normal" >Monogram</text><rect x="32.5" y="23.4" width="522.5" height="24" fill="#ffffff"/><path d="M42.2,35.2 H47.6 A2.2,2.2 0 0 1 47.6,39.6 H43.4 M43.8,33.4 L42,35.2 L43.8,37" fill="none" stroke="#3a3a3a" stroke-width="0.9"/><path d="M66.8,35.2 H61.4 A2.2,2.2 0 0 0 61.4,39.6 H65.6 M65.2,33.4 L67,35.2 L65.2,37" fill="none" stroke="#c9c9c9" stroke-width="0.9"/><rect x="76.5" y="28" width="0.6" height="14.6" fill="#e6e6e6"/><rect x="142.5" y="28" width="0.6" height="14.6" fill="#e6e6e6"/><rect x="198.2" y="28" width="0.6" height="14.6" fill="#e6e6e6"/><rect x="270.5" y="28" width="0.6" height="14.6" fill="#e6e6e6"/><rect x="298.3" y="28" width="0.6" height="14.6" fill="#e6e6e6"/><rect x="388" y="28" width="0.6" height="14.6" fill="#e6e6e6"/><rect x="441" y="28" width="0.6" height="14.6" fill="#e6e6e6"/><text x="83.9" y="31.6" font-size="5.1" fill="#5a5a5a" text-anchor="start" font-weight="normal" >Operation</text><rect x="83.6" y="35.3" width="40.6" height="8.3" rx="1.2" fill="#fff" stroke="#dcdcdc" stroke-width="0.5"/><text x="87" y="41.2" font-size="5.0" fill="#333" text-anchor="start" font-weight="normal" >Basic Cut</text><path d="M119.3,38.6 L121.5,38.6 L120.4,40.4 Z" fill="#333"/><rect x="127" y="35.3" width="8.5" height="8.3" rx="1.2" fill="#fff" stroke="#dcdcdc" stroke-width="0.5"/><text x="131.25" y="41.2" font-size="5.0" fill="#333" text-anchor="middle" font-weight="normal" >?</text><text x="160.4" y="31.6" font-size="5.1" fill="#5a5a5a" text-anchor="middle" font-weight="normal" >Select All</text><rect x="156.4" y="35.8" width="7.8" height="7.6" rx="1.5" fill="none" stroke="#444" stroke-width="0.7" stroke-dasharray="1,0.8"/><path d="M158.4,37.8 h3.8 v3.6 h-3.8 z M160.3,37.8 v3.6 M158.4,39.6 h3.8" fill="none" stroke="#444" stroke-width="0.55"/><text x="184.6" y="31.6" font-size="5.1" fill="#5a5a5a" text-anchor="middle" font-weight="normal" >Edit</text><path d="M179.6,42.6 L180.2,40.2 L185.2,35.2 L186.8,36.8 L181.8,41.8 Z" fill="none" stroke="#444" stroke-width="0.7"/><path d="M188.8,39 L191,39 L189.9,40.6 Z" fill="#333"/><text x="212.2" y="31.6" font-size="5.1" fill="#c4c4c4" text-anchor="middle" font-weight="normal" >Align</text><path d="M207.6,36 V43 M209,37.6 H213.8 V41.2 H209 Z" fill="none" stroke="#c8c8c8" stroke-width="0.7"/><path d="M215.4,39 L217.2,39 L216.3,40.4 Z" fill="#c8c8c8"/><text x="234.5" y="31.6" font-size="5.1" fill="#5a5a5a" text-anchor="middle" font-weight="normal" >Arrange</text><path d="M229.4,35.8 h4.2 v4.2 h-4.2 z" fill="none" stroke="#444" stroke-width="0.7"/><path d="M231.8,38.2 h4.2 v4.2 h-4.2 z" fill="#fff" stroke="#444" stroke-width="0.7"/><path d="M238.4,39 L240.6,39 L239.5,40.6 Z" fill="#333"/><text x="257" y="31.6" font-size="5.1" fill="#5a5a5a" text-anchor="middle" font-weight="normal" >Flip</text><path d="M254.6,35.4 L251.8,42.6 H254.6 Z M256,35.4 L258.8,42.6 H256 Z" fill="none" stroke="#444" stroke-width="0.7"/><path d="M261,39 L263.2,39 L262.1,40.6 Z" fill="#333"/><text x="284.6" y="31.6" font-size="5.1" fill="#5a5a5a" text-anchor="middle" font-weight="normal" >Offset</text><path d="M281.9,36.6 L285,38.4 L283.8,41.8 H280 L278.8,38.4 Z" fill="none" stroke="#444" stroke-width="0.7"/><circle cx="281.9" cy="39.4" r="4.2" fill="none" stroke="#444" stroke-width="0.6" stroke-dasharray="0.9,0.9"/><path d="M288.8,39 L291,39 L289.9,40.6 Z" fill="#333"/><text x="305.9" y="31.6" font-size="5.1" fill="#5a5a5a" text-anchor="start" font-weight="normal" >Size</text><text x="306.2" y="41.1" font-size="4.8" fill="#777" text-anchor="start" font-weight="normal" >W</text><rect x="313.2" y="35" width="26.100000000000023" height="8.6" rx="1.3" fill="#fff" stroke="#dcdcdc" stroke-width="0.5"/><text x="315.59999999999997" y="41.1" font-size="5.0" fill="#333" text-anchor="start" font-weight="normal" >1.579</text><path d="M335.0,38.4 L337.20000000000005,38.4 L336.1,36.9 Z M335.0,40.2 L337.20000000000005,40.2 L336.1,41.7 Z" fill="#333"/><path d="M340.8,33 H344.8 M350.4,33 H354.4" stroke="#cfcfcf" stroke-width="0.5"/><rect x="345.4" y="31.4" width="4.6" height="3.8" rx="0.6" fill="none" stroke="#555" stroke-width="0.7"/><path d="M346.4,31.4 V30 A1.3,1.3 0 0 1 349,30 V31.4" fill="none" stroke="#555" stroke-width="0.7"/><text x="347.6" y="41.1" font-size="4.8" fill="#777" text-anchor="start" font-weight="normal" >H</text><rect x="353.4" y="35" width="26.900000000000034" height="8.6" rx="1.3" fill="#fff" stroke="#dcdcdc" stroke-width="0.5"/><text x="355.79999999999995" y="41.1" font-size="5.0" fill="#333" text-anchor="start" font-weight="normal" >3</text><path d="M376.0,38.4 L378.20000000000005,38.4 L377.1,36.9 Z M376.0,40.2 L378.20000000000005,40.2 L377.1,41.7 Z" fill="#333"/><text x="394.9" y="31.6" font-size="5.1" fill="#5a5a5a" text-anchor="start" font-weight="normal" >Rotate</text><path d="M396.6,38.2 A3.3,3.3 0 0 1 402.6,37.6 M402.8,40.8 A3.3,3.3 0 0 1 396.8,41.4" fill="none" stroke="#444" stroke-width="0.8"/><path d="M402.8,36 L402.8,38.2 L400.6,38.2" fill="none" stroke="#444" stroke-width="0.7"/><path d="M396.6,43 L396.6,40.8 L398.8,40.8" fill="none" stroke="#444" stroke-width="0.7"/><rect x="406.9" y="35" width="26.5" height="8.6" rx="1.3" fill="#fff" stroke="#dcdcdc" stroke-width="0.5"/><text x="409.29999999999995" y="41.1" font-size="5.0" fill="#333" text-anchor="start" font-weight="normal" >0</text><path d="M429.09999999999997,38.4 L431.3,38.4 L430.2,36.9 Z M429.09999999999997,40.2 L431.3,40.2 L430.2,41.7 Z" fill="#333"/><text x="448.6" y="31.6" font-size="5.1" fill="#5a5a5a" text-anchor="start" font-weight="normal" >Position</text><text x="449.2" y="41.1" font-size="4.8" fill="#777" text-anchor="start" font-weight="normal" >X</text><rect x="453.7" y="35" width="27.100000000000023" height="8.6" rx="1.3" fill="#fff" stroke="#dcdcdc" stroke-width="0.5"/><text x="456.09999999999997" y="41.1" font-size="5.0" fill="#333" text-anchor="start" font-weight="normal" >11.292</text><path d="M476.5,38.4 L478.70000000000005,38.4 L477.6,36.9 Z M476.5,40.2 L478.70000000000005,40.2 L477.6,41.7 Z" fill="#333"/><text x="486.6" y="41.1" font-size="4.8" fill="#777" text-anchor="start" font-weight="normal" >Y</text><rect x="491.1" y="35" width="26.899999999999977" height="8.6" rx="1.3" fill="#fff" stroke="#dcdcdc" stroke-width="0.5"/><text x="493.5" y="41.1" font-size="5.0" fill="#333" text-anchor="start" font-weight="normal" >11.526</text><path d="M513.6999999999999,38.4 L515.9,38.4 L514.8,36.9 Z M513.6999999999999,40.2 L515.9,40.2 L514.8,41.7 Z" fill="#333"/><line x1="32.5" y1="47.3" x2="555" y2="47.3" stroke="#e4e4e4" stroke-width="0.6"/><rect x="554.7" y="23.4" width="145.3" height="641" fill="#ffffff"/><rect x="554.2" y="23.4" width="0.8" height="641" fill="#e8e8e8"/><rect x="558" y="69.6" width="141" height="522.4" fill="#f8f8f8"/><rect x="698.8" y="23.4" width="1.2" height="641" fill="#e2e2e2"/><rect x="698.8" y="40" width="1.2" height="15.5" fill="#c4c4c4"/><text x="563.9" y="37.8" font-size="7.2" fill="#1d8a6f" text-anchor="start" font-weight="normal" stroke="#1d8a6f" stroke-width="0.25">Layers</text><text x="599.7" y="37.8" font-size="7.0" fill="#666" text-anchor="start" font-weight="normal" >Color Sync</text><rect x="554.7" y="46.6" width="144" height="0.6" fill="#e8e8e8"/><rect x="556" y="44.8" width="35.8" height="1.9" fill="#1d8a6f"/><path d="M566.4,54 V61.6 M565,55.6 H570.6 M567.6,60.6 H573.2 M571.6,57.2 V62.4" fill="none" stroke="#555" stroke-width="0.8"/><circle cx="566.4" cy="55.6" r="1.1" fill="#fff" stroke="#555" stroke-width="0.6"/><circle cx="571.6" cy="60.6" r="1.1" fill="#fff" stroke="#555" stroke-width="0.6"/><circle cx="566.4" cy="60.6" r="0.9" fill="#555"/><circle cx="571.6" cy="55.6" r="0.9" fill="#555"/><rect x="584.6" y="54" width="5.6" height="5.6" fill="none" stroke="#555" stroke-width="0.8"/><rect x="586.8" y="56.2" width="5.8" height="5.8" fill="#fff" stroke="#555" stroke-width="0.8"/><path d="M589.7,57.6 V60.6 M588.2,59.1 H591.2" stroke="#555" stroke-width="0.6"/><path d="M603.4,55 H611.4 M605.6,55 V53.6 H609.2 V55 M604.4,55 L605,62.2 H609.8 L610.4,55 M606.4,56.8 V60.4 M608.4,56.8 V60.4" fill="none" stroke="#555" stroke-width="0.8"/><rect x="558" y="70.2" width="139.2" height="26.6" fill="#e3f5ef"/><rect x="558" y="96.8" width="139.2" height="53.6" fill="#effaf6"/><rect x="558" y="314.5" width="139.2" height="27" fill="#efefef"/><path d="M563.6,82.10000000000001 L565.6,84.10000000000001 L567.6,82.10000000000001" fill="none" stroke="#555" stroke-width="0.8"/><text x="588.6" y="85.8" font-size="7.3" fill="#3a3a3a" text-anchor="start" font-weight="normal" >X-mas Tree Tag</text><text x="603.5" y="113.0" font-size="7.3" fill="#3a3a3a" text-anchor="start" font-weight="normal" >X-mas Tree Tag</text><text x="603.5" y="140.4" font-size="7.3" fill="#3a3a3a" text-anchor="start" font-weight="normal" >X-mas Tree Tag</text><path d="M563.6,163.1 L565.6,165.1 L567.6,163.1" fill="none" stroke="#555" stroke-width="0.8"/><text x="588.6" y="166.79999999999998" font-size="7.3" fill="#3a3a3a" text-anchor="start" font-weight="normal" >Christmas Tree</text><text x="603.5" y="193.99999999999997" font-size="7.3" fill="#3a3a3a" text-anchor="start" font-weight="normal" >Christmas Tree</text><text x="603.5" y="221.39999999999998" font-size="7.3" fill="#3a3a3a" text-anchor="start" font-weight="normal" >Christmas Tree</text><path d="M563.6,244.5 L565.6,246.5 L567.6,244.5" fill="none" stroke="#555" stroke-width="0.8"/><text x="588.6" y="248.2" font-size="7.3" fill="#3a3a3a" text-anchor="start" font-weight="normal" >Stocking Tag</text><text x="603.5" y="275.40000000000003" font-size="7.3" fill="#3a3a3a" text-anchor="start" font-weight="normal" >Stocking Tag</text><text x="603.5" y="302.8" font-size="7.3" fill="#3a3a3a" text-anchor="start" font-weight="normal" >Stocking Tag</text><path d="M563.6,326.09999999999997 L565.6,328.09999999999997 L567.6,326.09999999999997" fill="none" stroke="#555" stroke-width="0.8"/><text x="588.6" y="329.8" font-size="7.3" fill="#3a3a3a" text-anchor="start" font-weight="normal" >Reindeer Gift Tag</text><text x="603.5" y="357.0" font-size="7.3" fill="#3a3a3a" text-anchor="start" font-weight="normal" >Reindeer Gift Tag</text><text x="603.5" y="384.40000000000003" font-size="7.3" fill="#3a3a3a" text-anchor="start" font-weight="normal" >Reindeer Gift Tag</text><path d="M563.6,407.29999999999995 L565.6,409.29999999999995 L567.6,407.29999999999995" fill="none" stroke="#555" stroke-width="0.8"/><text x="588.6" y="411.0" font-size="7.3" fill="#3a3a3a" text-anchor="start" font-weight="normal" >Ice Skates Tag</text><text x="603.5" y="438.2" font-size="7.3" fill="#3a3a3a" text-anchor="start" font-weight="normal" >Ice Skates Tag</text><text x="603.5" y="465.6" font-size="7.3" fill="#3a3a3a" text-anchor="start" font-weight="normal" >Ice Skates Tag</text><path d="M563.6,488.9 L565.6,490.9 L567.6,488.9" fill="none" stroke="#555" stroke-width="0.8"/><text x="588.6" y="492.6" font-size="7.3" fill="#3a3a3a" text-anchor="start" font-weight="normal" >Star Tag</text><text x="603.5" y="519.8000000000001" font-size="7.3" fill="#3a3a3a" text-anchor="start" font-weight="normal" >Star Tag</text><text x="603.5" y="547.2" font-size="7.3" fill="#3a3a3a" text-anchor="start" font-weight="normal" >Star Tag</text><path d="M563.6,570.0 L565.6,572.0 L567.6,570.0" fill="none" stroke="#555" stroke-width="0.8"/><text x="588.6" y="573.7" font-size="7.3" fill="#3a3a3a" text-anchor="start" font-weight="normal" >Peppermint Candy</text><path d="M685,327.4 Q688,324.4 691,327.4 Q688,330.4 685,327.4 Z" fill="#777"/><circle cx="688" cy="327.4" r="0.9" fill="#efefef"/><ellipse cx="578.7" cy="83.3" rx="3" ry="5.4" fill="#7db443"/><path d="M578.7,80.3 L580.3000000000001,85.5 L577.1,85.5 Z" fill="#4f9a36"/><ellipse cx="593.9" cy="110.4" rx="3" ry="5.4" fill="#9ccb5a"/><path d="M593.9,107.4 L595.5,112.60000000000001 L592.3,112.60000000000001 Z" fill="#ffffff"/><ellipse cx="593.9" cy="110.4" rx="1.6" ry="3.4" fill="#fff"/><path d="M593.9,107.6 L595.1,112.6 L592.6999999999999,112.6 Z" fill="#9ccb5a"/><ellipse cx="593.9" cy="137.8" rx="3" ry="5.4" fill="#4f9a36"/><path d="M578.7,158.79999999999998 L582.5,169.39999999999998 L574.9000000000001,169.39999999999998 Z" fill="#6aa83c"/><path d="M577.7,164.2 l1.2,-1 l0.8,2 M576.7,167.2 l2,-1 l1.5,1.5" stroke="#4f9a36" stroke-width="0.6" fill="none"/><path d="M593.9,186.0 L597.6999999999999,196.6 L590.1,196.6 Z" fill="#9fc47a"/><path d="M592.9,191.4 l1.2,-1 l0.8,2 M591.9,194.4 l2,-1 l1.5,1.5" stroke="#ffffff" stroke-width="0.6" fill="none"/><path d="M593.9,213.2 L597.6999999999999,223.79999999999998 L590.1,223.79999999999998 Z" fill="#4f9a36"/><path d="M576.1,240.6 L580.3000000000001,240.0 L580.7,243.2 L581.5,247.79999999999998 Q581.5,250.79999999999998 578.1,251.2 Q575.3000000000001,251.2 575.7,248.4 L577.5,246.2 L576.1,243.2 Z" fill="#3f93a3"/><path d="M577.1,244.0 L580.1,243.6 L580.5,247.6 Q578.7,250.0 576.9000000000001,249.2" fill="#2e7fa8"/><path d="M591.3,267.8 L595.5,267.2 L595.9,270.40000000000003 L596.6999999999999,275.0 Q596.6999999999999,278.0 593.3,278.40000000000003 Q590.5,278.40000000000003 590.9,275.6 L592.6999999999999,273.40000000000003 L591.3,270.40000000000003 Z" fill="#cfe8ee"/><path d="M592.3,271.2 L595.3,270.8 L595.6999999999999,274.8 Q593.9,277.2 592.1,276.40000000000003" fill="#5aaab8"/><path d="M591.3,295 L595.5,294.4 L595.9,297.6 L596.6999999999999,302.2 Q596.6999999999999,305.2 593.3,305.6 Q590.5,305.6 590.9,302.8 L592.6999999999999,300.6 L591.3,297.6 Z" fill="#3a8f9c"/><path d="M575.7,332.59999999999997 L575.7,324.8 A3,3 0 0 1 581.7,324.8 L581.7,332.59999999999997 Z" fill="#56a7b5"/><path d="M577.2,330.7 L577.5,327.7 L579.9000000000001,327.4 L579.7,324.59999999999997 M579.9000000000001,327.4 L580.3000000000001,330.7" stroke="#3a8f9c" stroke-width="0.8" fill="none"/><path d="M590.9,359.79999999999995 L590.9,352.0 A3,3 0 0 1 596.9,352.0 L596.9,359.79999999999995 Z" fill="#6cb6c4"/><path d="M592.4,357.9 L592.6999999999999,354.9 L595.1,354.59999999999997 L594.9,351.79999999999995 M595.1,354.59999999999997 L595.5,357.9" stroke="#ffffff" stroke-width="0.8" fill="none"/><path d="M590.9,387.0 L590.9,379.20000000000005 A3,3 0 0 1 596.9,379.20000000000005 L596.9,387.0 Z" fill="#3a8f9c"/><path d="M575.7,413.79999999999995 L575.7,405.2 Q575.7,404.2 576.9000000000001,404.2 Q577.7,402.79999999999995 578.7,402.79999999999995 Q579.7,402.79999999999995 580.5,404.2 Q581.7,404.2 581.7,405.2 L581.7,413.79999999999995 Z" fill="#e0408f"/><path d="M576.5,406.79999999999995 H580.7 M576.5,409.79999999999995 L580.9000000000001,408.59999999999997 M576.7,411.79999999999995 H580.7" stroke="#f5b3d3" stroke-width="0.9" fill="none"/><path d="M590.9,441.0 L590.9,432.40000000000003 Q590.9,431.40000000000003 592.1,431.40000000000003 Q592.9,430.0 593.9,430.0 Q594.9,430.0 595.6999999999999,431.40000000000003 Q596.9,431.40000000000003 596.9,432.40000000000003 L596.9,441.0 Z" fill="#f4a6cc"/><path d="M591.6999999999999,434.0 H595.9 M591.6999999999999,437.0 L596.1,435.8 M591.9,439.0 H595.9" stroke="#ffffff" stroke-width="0.9" fill="none"/><path d="M590.9,468.2 L590.9,459.6 Q590.9,458.6 592.1,458.6 Q592.9,457.2 593.9,457.2 Q594.9,457.2 595.6999999999999,458.6 Q596.9,458.6 596.9,459.6 L596.9,468.2 Z" fill="#e0408f"/><path d="M577.1,484.6 L580.3000000000001,484.6 L581.7,486.6 L581.7,495.4 L575.7,495.4 L575.7,486.6 Z" fill="#86ba45"/><circle cx="578.7" cy="490.6" r="1.3" fill="#4f9a36"/><path d="M592.3,511.80000000000007 L595.5,511.80000000000007 L596.9,513.8000000000001 L596.9,522.6 L590.9,522.6 L590.9,513.8000000000001 Z" fill="#92c456"/><circle cx="593.9" cy="517.8000000000001" r="1.3" fill="#ffffff"/><path d="M592.3,539.0 L595.5,539.0 L596.9,541.0 L596.9,549.8 L590.9,549.8 L590.9,541.0 Z" fill="#4f9a36"/><path d="M574,573.2 L576,567.8 L578.4,570 L580.4,567.4 L583.6,569 L582.2,572.8 L584.2,574.4 L580.6,574.8 L577.8,573.6 Z" fill="#ee7fb8"/><path d="M576.4,572 L579,569 L581.6,571.6" stroke="#d63a8a" stroke-width="0.7" fill="none"/><rect x="554.7" y="592" width="145" height="24.1" fill="#ececec"/><rect x="560.3" y="595.4" width="25.7" height="17.1" rx="1.5" fill="#fff" stroke="#bdbdbd" stroke-width="0.6"/><text x="590.7" y="605.6" font-size="4.9" fill="#444" text-anchor="start" font-weight="normal" >Blank Canvas</text><rect x="554.7" y="616.1" width="145" height="23.2" fill="#ffffff"/><rect x="565.8" y="619.4" width="4.8" height="4.8" rx="1" fill="none" stroke="#404040" stroke-width="0.8"/><rect x="567.4" y="621.6" width="4.8" height="4.8" rx="1" fill="none" stroke="#404040" stroke-width="0.8"/><text x="568.9" y="634.2" font-size="5.0" fill="#444" text-anchor="middle" font-weight="normal" >Slice</text><rect x="585.8" y="619.2" width="4.8" height="4.8" rx="1" fill="none" stroke="#404040" stroke-width="0.8"/><circle cx="590.4" cy="624.2" r="2.8" fill="none" stroke="#404040" stroke-width="0.8"/><path d="M597.8,622.2 L600,622.2 L598.9,623.8 Z" fill="#333"/><text x="592.4" y="634.2" font-size="5.0" fill="#444" text-anchor="middle" font-weight="normal" >Combine</text><rect x="613.2" y="620.6" width="8.4" height="4.4" rx="2.2" fill="none" stroke="#404040" stroke-width="0.8"/><rect x="614.8" y="621.8" width="5.4" height="2" rx="1" fill="none" stroke="#404040" stroke-width="0.6"/><text x="617.5" y="634.2" font-size="5.0" fill="#444" text-anchor="middle" font-weight="normal" >Attach</text><path d="M636.4,623.4 L640,625.4 L643.6,623.4 M636.4,625.2 L640,627.2 L643.6,625.2 M640,618.6 V623 M638.4,621.4 L640,623 L641.6,621.4" fill="none" stroke="#404040" stroke-width="0.8"/><text x="640.4" y="634.2" font-size="5.0" fill="#444" text-anchor="middle" font-weight="normal" >Flatten</text><circle cx="665.3" cy="623.2" r="3.8" fill="none" stroke="#c8c8c8" stroke-width="0.7" stroke-dasharray="1,0.9"/><text x="665.3" y="634.2" font-size="5.0" fill="#c4c4c4" text-anchor="middle" font-weight="normal" >Contour</text><rect x="555.4" y="639.3" width="143.6" height="24.7" fill="#1b4cc8"/><path d="M563,645.8 L578.8,645.8 L576.6,651.6 L578.8,657.6 L566,657.6 L564.2,659.6 L564.2,657.6 L563,657.6 Z" fill="#19a36b"/><path d="M568.6,651 h3.4 v3 h-3.4 z M569.4,651 v-0.9 a0.9,0.9 0 0 1 1.8,0 v0.9" fill="none" stroke="#fff" stroke-width="0.6"/><text x="582.6" y="654.1" font-size="7.05" fill="#ffffff" text-anchor="start" font-weight="normal" >Use 250k images for free</text><rect x="48.6" y="636.4" width="55" height="14.3" rx="7.15" fill="#f0f0f0" fill-opacity="0.85"/><circle cx="55.7" cy="643.6" r="4.4" fill="none" stroke="#c9c9c9" stroke-width="0.7"/><path d="M53.5,643.6 H57.9" stroke="#c9c9c9" stroke-width="0.7"/><circle cx="96" cy="643.6" r="4.4" fill="none" stroke="#c9c9c9" stroke-width="0.7"/><path d="M93.8,643.6 H98.2 M96,641.4 V645.8" stroke="#c9c9c9" stroke-width="0.7"/><text x="76.1" y="646.7" font-size="8.8" fill="#bdbdbd" text-anchor="middle" font-weight="normal" >150%</text></svg>
</body></html>
